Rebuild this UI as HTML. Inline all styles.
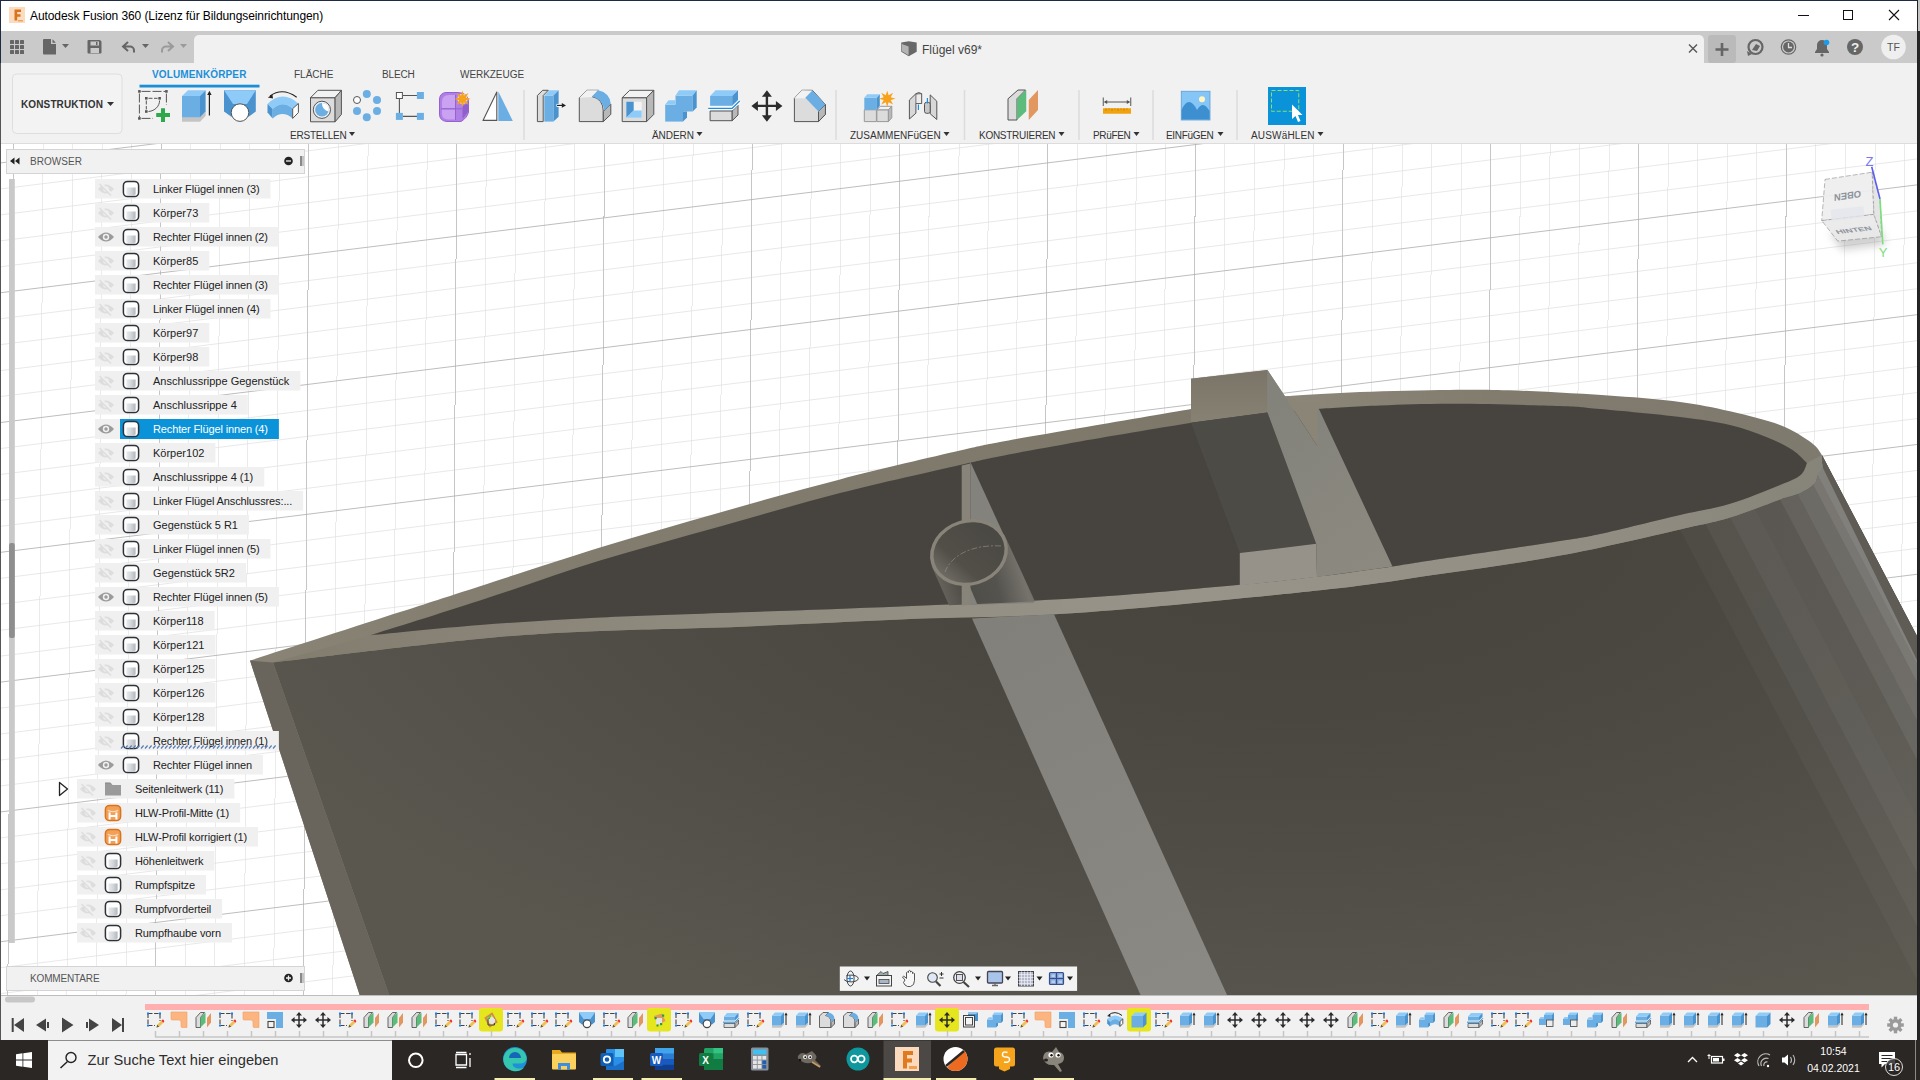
<!DOCTYPE html>
<html lang="de">
<head>
<meta charset="utf-8">
<title>Autodesk Fusion 360</title>
<style>
*{box-sizing:border-box;margin:0;padding:0}
html,body{width:1920px;height:1080px;overflow:hidden;background:#fff;font-family:"Liberation Sans",sans-serif;color:#333}
.abs{position:absolute}
#win{position:absolute;left:0;top:0;width:1917px;height:1040px;background:#fff;overflow:hidden}
#rightstrip{position:absolute;left:1917px;top:0;width:3px;height:1040px;background:linear-gradient(#c4c4c4 0,#c4c4c4 31px,#262626 31px);border-left:1px solid #222}
#titlebar{position:absolute;left:0;top:0;width:1917px;height:31px;background:#fff;border-top:1px solid #1f2a44}
#titlebar .ttl{position:absolute;left:30px;top:8px;font-size:12.2px;color:#000;white-space:nowrap;letter-spacing:-0.05px}
#qat{position:absolute;left:0;top:31px;width:1917px;height:32px;background:#cacaca}
#tab{position:absolute;left:194px;top:35px;width:1510px;height:28px;background:#f1f1f1;border-radius:5px 5px 0 0}
#toolbar{position:absolute;left:0;top:63px;width:1917px;height:81px;background:#f1f1f1;border-bottom:1px solid #dcdcdc}
#viewport{position:absolute;left:0;top:144px;width:1917px;height:852px;background:#fff;overflow:hidden}
#timeline{position:absolute;left:0;top:995px;width:1917px;height:45px;background:#f1f1f1;border-top:1px solid #bdbdbd}
#taskbar{position:absolute;left:0;top:1040px;width:1920px;height:40px;background:#2a2724}
#leftedge{position:absolute;left:0;top:0;width:1px;height:1040px;background:linear-gradient(#1f2a44 0,#1f2a44 63px,#555 63px)}
.tlabel{position:absolute;font-size:10.5px;color:#333;white-space:nowrap;letter-spacing:0.1px}
.tabname{position:absolute;top:69px;font-size:11px;color:#444;white-space:nowrap;letter-spacing:0.1px}
.row{position:absolute;height:20px;background:#f0f0f0;font-size:11px;color:#222;white-space:nowrap}
.row span{position:absolute;top:4px}
.bt{position:absolute;font-size:11px;color:#222;white-space:nowrap;line-height:14px;letter-spacing:0}
</style>
</head>
<body>
<div id="win">
  <div id="titlebar"></div>
  <div id="qat"></div>
  <div id="tab"></div>
  <div id="toolbar"></div>
  <div id="viewport">
    <!--VIEWPORT-->
<svg class="abs" style="left:0;top:-144px" width="1920" height="1080" viewBox="0 0 1920 1080">
<path d="M-104.7 144L-110.4 996M-75.1 144L-80.9 996M-45.6 144L-51.3 996M-16.1 144L-21.8 996M43.1 144L37.3 996M72.6 144L66.9 996M102.2 144L96.4 996M131.7 144L126.0 996M190.8 144L185.1 996M220.3 144L214.6 996M249.9 144L244.2 996M279.4 144L273.7 996M338.6 144L332.8 996M368.1 144L362.4 996M397.6 144L391.9 996M427.2 144L421.5 996M486.3 144L480.6 996M515.9 144L510.1 996M545.4 144L539.7 996M575.0 144L569.2 996M634.0 144L628.3 996M663.6 144L657.9 996M693.1 144L687.4 996M722.7 144L717.0 996M781.8 144L776.1 996M811.4 144L805.6 996M840.9 144L835.2 996M870.5 144L864.7 996M929.5 144L923.8 996M959.1 144L953.4 996M988.6 144L982.9 996M1018.2 144L1012.5 996M1077.3 144L1071.6 996M1106.8 144L1101.1 996M1136.4 144L1130.7 996M1166.0 144L1160.2 996M1225.0 144L1219.3 996M1254.6 144L1248.9 996M1284.2 144L1278.4 996M1313.7 144L1308.0 996M1372.8 144L1367.1 996M1402.3 144L1396.6 996M1431.9 144L1426.2 996M1461.5 144L1455.7 996M1520.5 144L1514.8 996M1550.1 144L1544.4 996M1579.7 144L1573.9 996M1609.2 144L1603.5 996M1668.3 144L1662.6 996M1697.8 144L1692.1 996M1727.4 144L1721.7 996M1757.0 144L1751.2 996M1816.0 144L1810.3 996M1845.6 144L1839.9 996M1875.2 144L1869.4 996M1904.7 144L1899.0 996M1963.8 144L1958.1 996M1993.3 144L1987.6 996M2022.9 144L2017.2 996M2052.4 144L2046.7 996" stroke="#ebebeb" stroke-width="1" fill="none" shape-rendering="crispEdges"/>
<path d="M0 59.2L1920 -178.9M0 85.1L1920 -153.0M0 111.1L1920 -127.0M0 137.0L1920 -101.0M0 189.0L1920 -49.1M0 214.9L1920 -23.2M0 240.9L1920 2.8M0 266.8L1920 28.8M0 318.8L1920 80.7M0 344.7L1920 106.6M0 370.7L1920 132.6M0 396.6L1920 158.6M0 448.6L1920 210.5M0 474.5L1920 236.4M0 500.5L1920 262.4M0 526.4L1920 288.4M0 578.4L1920 340.3M0 604.3L1920 366.2M0 630.3L1920 392.2M0 656.2L1920 418.2M0 708.2L1920 470.1M0 734.1L1920 496.0M0 760.1L1920 522.0M0 786.0L1920 548.0M0 838.0L1920 599.9M0 863.9L1920 625.8M0 889.9L1920 651.8M0 915.8L1920 677.8M0 967.8L1920 729.7M0 993.7L1920 755.6M0 1019.7L1920 781.6M0 1045.6L1920 807.6M0 1097.6L1920 859.5M0 1123.5L1920 885.4M0 1149.5L1920 911.4M0 1175.4L1920 937.4M0 1227.4L1920 989.3M0 1253.3L1920 1015.2M0 1279.3L1920 1041.2M0 1305.2L1920 1067.2M0 1357.2L1920 1119.1M0 1383.1L1920 1145.0M0 1409.1L1920 1171.0M0 1435.0L1920 1197.0" stroke="#dedede" stroke-width=".7" fill="none"/>
<path d="M-134.2 144L-140.0 996M13.5 144L7.8 996M161.2 144L155.5 996M309.0 144L303.3 996M456.8 144L451.0 996M604.5 144L598.8 996M752.2 144L746.5 996M900.0 144L894.3 996M1047.8 144L1042.0 996M1195.5 144L1189.8 996M1343.2 144L1337.5 996M1491.0 144L1485.3 996M1638.8 144L1633.0 996M1786.5 144L1780.8 996M1934.2 144L1928.5 996" stroke="#c6c6c6" stroke-width="1" fill="none" shape-rendering="crispEdges"/>
<path d="M0 33.2L1920 -204.9M0 163.0L1920 -75.1M0 292.8L1920 54.7M0 422.6L1920 184.5M0 552.4L1920 314.3M0 682.2L1920 444.1M0 812.0L1920 573.9M0 941.8L1920 703.7M0 1071.6L1920 833.5M0 1201.4L1920 963.3M0 1331.2L1920 1093.1" stroke="#acacac" stroke-width=".8" fill="none"/>
<defs>
<radialGradient id="gskin" gradientUnits="userSpaceOnUse" cx="0" cy="0" r="1" gradientTransform="translate(1300,520) scale(1150,540)"><stop offset="0" stop-color="#46433d"/><stop offset="0.35" stop-color="#4a4741"/><stop offset="0.6" stop-color="#4f4c46"/><stop offset="0.85" stop-color="#56534c"/><stop offset="1" stop-color="#5a574f"/></radialGradient>
<linearGradient id="grimL" gradientUnits="userSpaceOnUse" x1="300" y1="700" x2="1800" y2="450"><stop offset="0" stop-color="#837d70"/><stop offset="0.25" stop-color="#8f8a7e"/><stop offset="0.6" stop-color="#989489"/><stop offset="0.85" stop-color="#928e83"/><stop offset="1" stop-color="#87847a"/></linearGradient>
<linearGradient id="gtube" gradientUnits="userSpaceOnUse" x1="940" y1="590" x2="1030" y2="565"><stop offset="0" stop-color="#66635c"/><stop offset="0.25" stop-color="#4e4c46"/><stop offset="0.6" stop-color="#55534d"/><stop offset="0.9" stop-color="#75736c"/><stop offset="1" stop-color="#6a6861"/></linearGradient>
<linearGradient id="gtubein" gradientUnits="userSpaceOnUse" x1="935" y1="575" x2="1000" y2="535"><stop offset="0" stop-color="#76736b"/><stop offset="0.35" stop-color="#524f49"/><stop offset="1" stop-color="#4a4842"/></linearGradient>
<linearGradient id="grib" gradientUnits="userSpaceOnUse" x1="1270" y1="400" x2="1390" y2="570"><stop offset="0" stop-color="#83827b"/><stop offset="1" stop-color="#8c8a80"/></linearGradient>
<linearGradient id="gsil" gradientUnits="userSpaceOnUse" x1="250" y1="0" x2="1822" y2="0"><stop offset="0" stop-color="#8a8476"/><stop offset="0.16" stop-color="#837d70"/><stop offset="0.6" stop-color="#7e786b"/><stop offset="0.658" stop-color="#8c8779"/><stop offset="0.8" stop-color="#817b6e"/><stop offset="1" stop-color="#7f7a6e"/></linearGradient>
<linearGradient id="gbox" gradientUnits="userSpaceOnUse" x1="0" y1="372" x2="0" y2="420"><stop offset="0" stop-color="#7a7568"/><stop offset="1" stop-color="#878173"/></linearGradient>
<linearGradient id="gstrip" gradientUnits="userSpaceOnUse" x1="1000" y1="620" x2="1180" y2="990"><stop offset="0" stop-color="#81807b"/><stop offset="1" stop-color="#8a8983"/></linearGradient>
</defs>
<path d="M250.0 660.6C275.0 652.5 361.7 624.5 400.0 612.1C438.3 599.7 446.7 597.0 480.0 586.2C513.3 575.5 560.0 559.8 600.0 547.5C640.0 535.2 680.0 523.9 720.0 512.5C760.0 501.1 800.0 489.7 840.0 479.4C880.0 469.1 933.3 456.8 960.0 450.6C986.7 444.4 980.0 445.8 1000.0 442.0C1020.0 438.2 1048.2 433.5 1080.0 428.0C1111.8 422.5 1172.5 412.2 1191.0 409.0L1191.0 378.8L1267.5 370.0L1285.0 396.2L1285.0 396.2C1295.8 395.6 1324.2 393.5 1350.0 392.5C1375.8 391.5 1412.5 390.3 1440.0 390.0C1467.5 389.7 1485.8 389.5 1515.0 390.5C1544.2 391.5 1587.5 394.1 1615.0 396.0C1642.5 397.9 1660.8 399.4 1680.0 401.9C1699.2 404.4 1713.3 407.4 1730.0 411.2C1746.7 415.1 1766.5 419.8 1780.0 425.0C1793.5 430.2 1804.3 437.5 1811.2 442.5C1818.2 447.5 1820.1 452.9 1821.9 455.0L1917.0 636.0L1917.0 996.0L360.0 996.0Z" fill="url(#gsil)"/>
<polygon points="1191.0,378.8 1267.5,370.0 1267.5,412.8 1191.0,423.0" fill="url(#gbox)"/>
<path d="M273.0 662.5C307.5 658.5 425.5 644.0 480.0 638.8C534.5 633.5 560.0 632.9 600.0 631.0C640.0 629.1 670.0 629.4 720.0 627.5C770.0 625.6 840.0 621.9 900.0 619.4C960.0 616.9 1010.0 617.6 1080.0 612.8C1150.0 607.9 1260.0 596.8 1320.0 590.3C1380.0 583.8 1400.0 579.8 1440.0 574.0C1480.0 568.2 1520.0 563.0 1560.0 555.6C1600.0 548.2 1651.7 535.8 1680.0 529.4C1708.3 523.0 1713.3 522.5 1730.0 517.5C1746.7 512.5 1768.8 503.4 1780.0 499.4C1791.2 495.4 1792.0 496.2 1797.5 493.8C1803.0 491.2 1809.7 487.5 1813.0 484.4C1816.3 481.3 1816.0 478.2 1817.5 475.0C1819.0 471.8 1821.2 468.3 1821.9 465.0C1822.6 461.7 1821.9 456.7 1821.9 455.0L1917.0 636.0L1917.0 996.0L389.5 996.0Z" fill="url(#gskin)"/>
<polygon points="1680.0,529.4 1705.0,523.5 2105.0,1283.5 2080.0,1289.4" fill="#fff" fill-opacity="0.03"/>
<polygon points="1705.0,523.5 1730.0,517.5 2130.0,1277.5 2105.0,1283.5" fill="#fff" fill-opacity="0.065"/>
<polygon points="1730.0,517.5 1755.0,508.5 2155.0,1268.5 2130.0,1277.5" fill="#fff" fill-opacity="0.1"/>
<polygon points="1755.0,508.5 1780.0,499.4 2180.0,1259.4 2155.0,1268.5" fill="#fff" fill-opacity="0.085"/>
<polygon points="1780.0,499.4 1797.5,493.8 2197.5,1253.8 2180.0,1259.4" fill="#fff" fill-opacity="0.14"/>
<polygon points="1797.5,493.8 1813.0,484.4 2213.0,1244.4 2197.5,1253.8" fill="#fff" fill-opacity="0.19"/>
<polygon points="1813.0,484.4 1817.5,475.0 2217.5,1235.0 2213.0,1244.4" fill="#fff" fill-opacity="0.25"/>
<polygon points="1817.5,475.0 1822.5,463.0 2222.5,1223.0 2217.5,1235.0" fill="#fff" fill-opacity="0.3"/>
<polygon points="1821.9,455.0 1917.0,636.0 1917.0,660.0 1823.0,468.0" fill="#5e5c54"/>
<polygon points="250.0,660.6 273.0,662.5 389.5,996.0 360.0,996.0" fill="#69655d"/>
<path d="M273.0 662.5C307.5 658.5 425.5 644.0 480.0 638.8C534.5 633.5 560.0 632.9 600.0 631.0C640.0 629.1 670.0 629.4 720.0 627.5C770.0 625.6 840.0 621.9 900.0 619.4C960.0 616.9 1010.0 617.6 1080.0 612.8C1150.0 607.9 1260.0 596.8 1320.0 590.3C1380.0 583.8 1400.0 579.8 1440.0 574.0C1480.0 568.2 1520.0 563.0 1560.0 555.6C1600.0 548.2 1651.7 535.8 1680.0 529.4C1708.3 523.0 1713.3 522.5 1730.0 517.5C1746.7 512.5 1768.8 503.4 1780.0 499.4C1791.2 495.4 1792.0 496.2 1797.5 493.8C1803.0 491.2 1809.7 487.5 1813.0 484.4C1816.3 481.3 1816.0 478.2 1817.5 475.0C1819.0 471.8 1821.2 468.3 1821.9 465.0C1822.6 461.7 1821.9 456.7 1821.9 455.0L1806.9 463.1C1805.9 465.1 1805.1 471.4 1800.6 475.0C1796.1 478.6 1791.8 480.2 1780.0 485.0C1768.2 489.8 1746.7 498.8 1730.0 503.8C1713.3 508.8 1701.7 510.0 1680.0 515.0C1658.3 520.0 1620.0 529.7 1600.0 534.0C1580.0 538.3 1586.7 536.8 1560.0 541.0C1533.3 545.2 1467.9 554.8 1440.0 559.0C1412.1 563.2 1412.5 563.5 1392.5 566.4C1372.5 569.3 1345.5 573.2 1320.0 576.2C1294.5 579.3 1279.8 581.1 1239.8 584.8C1199.8 588.4 1136.6 594.5 1080.0 598.1C1023.4 601.7 960.0 604.0 900.0 606.5C840.0 609.0 770.0 611.2 720.0 613.0C670.0 614.8 640.0 615.5 600.0 617.5C560.0 619.5 518.2 622.0 480.0 625.0C441.8 628.0 388.8 633.5 370.6 635.2Z" fill="url(#grimL)"/>
<path d="M370.6 635.2C388.8 629.5 441.8 613.0 480.0 600.6C518.2 588.2 560.0 573.0 600.0 560.6C640.0 548.2 680.0 537.8 720.0 526.5C760.0 515.2 800.0 503.4 840.0 493.1C880.0 482.9 933.3 471.1 960.0 465.0C986.7 458.9 980.0 460.2 1000.0 456.2C1020.0 452.3 1048.2 447.1 1080.0 441.5C1111.8 435.9 1172.5 425.9 1191.0 422.8L1267.5 412.5L1318.8 408.8L1318.8 408.8C1329.0 408.2 1357.3 406.3 1380.0 405.5C1402.7 404.7 1425.0 403.7 1455.0 403.8C1485.0 403.8 1535.8 405.1 1560.0 406.0C1584.2 406.9 1580.0 407.2 1600.0 409.0C1620.0 410.8 1658.3 414.3 1680.0 417.0C1701.7 419.7 1715.4 421.6 1730.0 425.0C1744.6 428.4 1757.1 433.3 1767.5 437.5C1777.9 441.7 1785.9 445.7 1792.5 450.0C1799.1 454.3 1804.5 460.9 1806.9 463.1L1806.9 463.1C1805.9 465.1 1805.1 471.4 1800.6 475.0C1796.1 478.6 1791.8 480.2 1780.0 485.0C1768.2 489.8 1746.7 498.8 1730.0 503.8C1713.3 508.8 1701.7 510.0 1680.0 515.0C1658.3 520.0 1620.0 529.7 1600.0 534.0C1580.0 538.3 1586.7 536.8 1560.0 541.0C1533.3 545.2 1467.9 554.8 1440.0 559.0C1412.1 563.2 1412.5 563.5 1392.5 566.4C1372.5 569.3 1345.5 573.2 1320.0 576.2C1294.5 579.3 1279.8 581.1 1239.8 584.8C1199.8 588.4 1136.6 594.5 1080.0 598.1C1023.4 601.7 960.0 604.0 900.0 606.5C840.0 609.0 770.0 611.2 720.0 613.0C670.0 614.8 640.0 615.5 600.0 617.5C560.0 619.5 518.2 622.0 480.0 625.0C441.8 628.0 388.8 633.5 370.6 635.2Z" fill="#47443f"/>
<polygon points="972.0,618.5 1054.0,614.2 1227.5,996.0 1141.0,996.0" fill="url(#gstrip)"/>
<polygon points="970.4,462.0 1034.0,601.0 1034.0,603.0 970.4,605.0" fill="#83827c"/>
<polygon points="931.5,566.0 949.0,605.2 1035.0,601.5 1004.5,535.0" fill="url(#gtube)"/>
<polygon points="961.7,465.5 970.4,463.5 970.4,605.0 961.7,605.4" fill="#89847a"/>
<polygon points="969.5,586.0 977.5,604.7 969.5,605.0" fill="#83827c"/>
<g transform="rotate(-17 969 552.5)"><ellipse cx="969" cy="552.5" rx="39.5" ry="33" fill="#89847a"/><ellipse cx="969" cy="552.5" rx="36" ry="29.7" fill="url(#gtubein)"/></g>
<path d="M945 572 C950 558 968 544 1002 546" stroke="#a9a69d" stroke-width="0.6" stroke-dasharray="6 2 2 2" opacity=".8" fill="none"/>
<polygon points="1191.0,422.8 1267.5,412.5 1316.2,543.8 1239.8,553.1" fill="#4d4b46"/>
<polygon points="1239.8,553.1 1316.2,543.8 1317.0,577.0 1239.8,585.5" fill="#96928a"/>
<polygon points="1267.5,370.0 1285.0,396.2 1319.5,408.2 1318.2,409.5 1318.2,447.3" fill="#8a8577"/>
<polygon points="1267.5,370.0 1267.5,412.5 1316.2,543.8 1317.0,577.0 1392.5,566.4 1318.8,408.8 1317.5,410.0 1317.5,446.2" fill="url(#grib)"/>
</svg>
<!--/VIEWPORT-->
<!--BROWSER-->
<svg class="abs" style="left:0;top:-144px" width="320" height="1080" viewBox="0 0 320 1080"><defs><linearGradient id="bodyg" x1="0" y1="0" x2="1" y2="0"><stop offset="0" stop-color="#e9ebee"/><stop offset=".5" stop-color="#d3d6da"/><stop offset="1" stop-color="#b3b7bd"/></linearGradient></defs>
<rect x="9" y="179" width="5.800" height="764" fill="#c9c9c9"/><rect x="9" y="543" width="5.800" height="95" rx="2" fill="#8e8e8e"/>
<rect x="6.5" y="149.5" width="298" height="24" fill="#f1f1f1" stroke="#d4d4d4"/>
<path d="M14.500 157.500v7l-4.500-3.500zM19.500 157.500v7l-4.500-3.500z" fill="#222"/>
<circle cx="288.500" cy="161" r="4.300" fill="#222"/><path d="M286 161h5" stroke="#f1f1f1" stroke-width="1.300"/><path d="M301 156v10" stroke="#222" stroke-width="1"/><path d="M303 156v10" stroke="#999" stroke-width="1"/>
<rect x="6.500" y="966.500" width="298" height="24" fill="#f1f1f1" stroke="#d4d4d4"/>
<circle cx="288.500" cy="978" r="4.300" fill="#222"/><path d="M286 978h5M288.500 975.500v5" stroke="#f1f1f1" stroke-width="1.300"/><path d="M301 973v10" stroke="#222" stroke-width="1"/><path d="M303 973v10" stroke="#999" stroke-width="1"/>
<rect x="95" y="179" width="175.46875" height="19.500" fill="#f0f0f0"/>
<g opacity=".55"><path d="M98 189Q106 180 114 189Q106 198 98 189Z" fill="#cfcfcf"/><circle cx="106" cy="189" r="2.8" fill="#f0f0f0"/><path d="M100 183L112 195" stroke="#f0f0f0" stroke-width="3"/><path d="M99.5 184L111 195.5" stroke="#cfcfcf" stroke-width="1.4"/></g>
<rect x="123.4" y="181.4" width="15.2" height="15.2" rx="4.2" fill="#fff" stroke="#2f3338" stroke-width="1.5"/><path d="M126.4 187.6H135.6V194.4Q131.0 196.20000000000002 126.4 194.4Z" fill="url(#bodyg)"/>
<rect x="95" y="203" width="114.265625" height="19.500" fill="#f0f0f0"/>
<g opacity=".55"><path d="M98 213Q106 204 114 213Q106 222 98 213Z" fill="#cfcfcf"/><circle cx="106" cy="213" r="2.8" fill="#f0f0f0"/><path d="M100 207L112 219" stroke="#f0f0f0" stroke-width="3"/><path d="M99.5 208L111 219.5" stroke="#cfcfcf" stroke-width="1.4"/></g>
<rect x="123.4" y="205.4" width="15.2" height="15.2" rx="4.2" fill="#fff" stroke="#2f3338" stroke-width="1.5"/><path d="M126.4 211.6H135.6V218.4Q131.0 220.20000000000002 126.4 218.4Z" fill="url(#bodyg)"/>
<rect x="95" y="227" width="183.890625" height="19.500" fill="#f0f0f0"/>
<path d="M98 237Q106 228 114 237Q106 246 98 237Z" fill="#9b9b9b"/><circle cx="106" cy="237" r="3.2" fill="#f0f0f0"/><circle cx="106" cy="237" r="1.7" fill="#9b9b9b"/>
<rect x="123.4" y="229.4" width="15.2" height="15.2" rx="4.2" fill="#fff" stroke="#2f3338" stroke-width="1.5"/><path d="M126.4 235.6H135.6V242.4Q131.0 244.20000000000002 126.4 242.4Z" fill="url(#bodyg)"/>
<rect x="95" y="251" width="114.265625" height="19.500" fill="#f0f0f0"/>
<g opacity=".55"><path d="M98 261Q106 252 114 261Q106 270 98 261Z" fill="#cfcfcf"/><circle cx="106" cy="261" r="2.8" fill="#f0f0f0"/><path d="M100 255L112 267" stroke="#f0f0f0" stroke-width="3"/><path d="M99.5 256L111 267.5" stroke="#cfcfcf" stroke-width="1.4"/></g>
<rect x="123.4" y="253.4" width="15.2" height="15.2" rx="4.2" fill="#fff" stroke="#2f3338" stroke-width="1.5"/><path d="M126.4 259.6H135.6V266.4Q131.0 268.2 126.4 266.4Z" fill="url(#bodyg)"/>
<rect x="95" y="275" width="183.890625" height="19.500" fill="#f0f0f0"/>
<g opacity=".55"><path d="M98 285Q106 276 114 285Q106 294 98 285Z" fill="#cfcfcf"/><circle cx="106" cy="285" r="2.8" fill="#f0f0f0"/><path d="M100 279L112 291" stroke="#f0f0f0" stroke-width="3"/><path d="M99.5 280L111 291.5" stroke="#cfcfcf" stroke-width="1.4"/></g>
<rect x="123.4" y="277.4" width="15.2" height="15.2" rx="4.2" fill="#fff" stroke="#2f3338" stroke-width="1.5"/><path d="M126.4 283.59999999999997H135.6V290.4Q131.0 292.2 126.4 290.4Z" fill="url(#bodyg)"/>
<rect x="95" y="299" width="175.46875" height="19.500" fill="#f0f0f0"/>
<g opacity=".55"><path d="M98 309Q106 300 114 309Q106 318 98 309Z" fill="#cfcfcf"/><circle cx="106" cy="309" r="2.8" fill="#f0f0f0"/><path d="M100 303L112 315" stroke="#f0f0f0" stroke-width="3"/><path d="M99.5 304L111 315.5" stroke="#cfcfcf" stroke-width="1.4"/></g>
<rect x="123.4" y="301.4" width="15.2" height="15.2" rx="4.2" fill="#fff" stroke="#2f3338" stroke-width="1.5"/><path d="M126.4 307.59999999999997H135.6V314.4Q131.0 316.2 126.4 314.4Z" fill="url(#bodyg)"/>
<rect x="95" y="323" width="114.265625" height="19.500" fill="#f0f0f0"/>
<g opacity=".55"><path d="M98 333Q106 324 114 333Q106 342 98 333Z" fill="#cfcfcf"/><circle cx="106" cy="333" r="2.8" fill="#f0f0f0"/><path d="M100 327L112 339" stroke="#f0f0f0" stroke-width="3"/><path d="M99.5 328L111 339.5" stroke="#cfcfcf" stroke-width="1.4"/></g>
<rect x="123.4" y="325.4" width="15.2" height="15.2" rx="4.2" fill="#fff" stroke="#2f3338" stroke-width="1.5"/><path d="M126.4 331.59999999999997H135.6V338.4Q131.0 340.2 126.4 338.4Z" fill="url(#bodyg)"/>
<rect x="95" y="347" width="114.265625" height="19.500" fill="#f0f0f0"/>
<g opacity=".55"><path d="M98 357Q106 348 114 357Q106 366 98 357Z" fill="#cfcfcf"/><circle cx="106" cy="357" r="2.8" fill="#f0f0f0"/><path d="M100 351L112 363" stroke="#f0f0f0" stroke-width="3"/><path d="M99.5 352L111 363.5" stroke="#cfcfcf" stroke-width="1.4"/></g>
<rect x="123.4" y="349.4" width="15.2" height="15.2" rx="4.2" fill="#fff" stroke="#2f3338" stroke-width="1.5"/><path d="M126.4 355.59999999999997H135.6V362.4Q131.0 364.2 126.4 362.4Z" fill="url(#bodyg)"/>
<rect x="95" y="371" width="205.359375" height="19.500" fill="#f0f0f0"/>
<g opacity=".55"><path d="M98 381Q106 372 114 381Q106 390 98 381Z" fill="#cfcfcf"/><circle cx="106" cy="381" r="2.8" fill="#f0f0f0"/><path d="M100 375L112 387" stroke="#f0f0f0" stroke-width="3"/><path d="M99.5 376L111 387.5" stroke="#cfcfcf" stroke-width="1.4"/></g>
<rect x="123.4" y="373.4" width="15.2" height="15.2" rx="4.2" fill="#fff" stroke="#2f3338" stroke-width="1.5"/><path d="M126.4 379.59999999999997H135.6V386.4Q131.0 388.2 126.4 386.4Z" fill="url(#bodyg)"/>
<rect x="95" y="395" width="152.78125" height="19.500" fill="#f0f0f0"/>
<g opacity=".55"><path d="M98 405Q106 396 114 405Q106 414 98 405Z" fill="#cfcfcf"/><circle cx="106" cy="405" r="2.8" fill="#f0f0f0"/><path d="M100 399L112 411" stroke="#f0f0f0" stroke-width="3"/><path d="M99.5 400L111 411.5" stroke="#cfcfcf" stroke-width="1.4"/></g>
<rect x="123.4" y="397.4" width="15.2" height="15.2" rx="4.2" fill="#fff" stroke="#2f3338" stroke-width="1.5"/><path d="M126.4 403.59999999999997H135.6V410.4Q131.0 412.2 126.4 410.4Z" fill="url(#bodyg)"/>
<rect x="95" y="419" width="25" height="20" fill="#f0f0f0"/><rect x="120" y="419" width="158.890625" height="20" fill="#0a93d9"/>
<path d="M98 429Q106 420 114 429Q106 438 98 429Z" fill="#9b9b9b"/><circle cx="106" cy="429" r="3.2" fill="#f0f0f0"/><circle cx="106" cy="429" r="1.7" fill="#9b9b9b"/>
<rect x="123.4" y="421.4" width="15.2" height="15.2" rx="4.2" fill="#fff" stroke="#2f3338" stroke-width="1.5"/><path d="M126.4 427.59999999999997H135.6V434.4Q131.0 436.2 126.4 434.4Z" fill="url(#bodyg)"/>
<rect x="95" y="443" width="120.375" height="19.500" fill="#f0f0f0"/>
<g opacity=".55"><path d="M98 453Q106 444 114 453Q106 462 98 453Z" fill="#cfcfcf"/><circle cx="106" cy="453" r="2.8" fill="#f0f0f0"/><path d="M100 447L112 459" stroke="#f0f0f0" stroke-width="3"/><path d="M99.5 448L111 459.5" stroke="#cfcfcf" stroke-width="1.4"/></g>
<rect x="123.4" y="445.4" width="15.2" height="15.2" rx="4.2" fill="#fff" stroke="#2f3338" stroke-width="1.5"/><path d="M126.4 451.59999999999997H135.6V458.4Q131.0 460.2 126.4 458.4Z" fill="url(#bodyg)"/>
<rect x="95" y="467" width="169.28125" height="19.500" fill="#f0f0f0"/>
<g opacity=".55"><path d="M98 477Q106 468 114 477Q106 486 98 477Z" fill="#cfcfcf"/><circle cx="106" cy="477" r="2.8" fill="#f0f0f0"/><path d="M100 471L112 483" stroke="#f0f0f0" stroke-width="3"/><path d="M99.5 472L111 483.5" stroke="#cfcfcf" stroke-width="1.4"/></g>
<rect x="123.4" y="469.4" width="15.2" height="15.2" rx="4.2" fill="#fff" stroke="#2f3338" stroke-width="1.5"/><path d="M126.4 475.59999999999997H135.6V482.4Q131.0 484.2 126.4 482.4Z" fill="url(#bodyg)"/>
<rect x="95" y="491" width="208.171875" height="19.500" fill="#f0f0f0"/>
<g opacity=".55"><path d="M98 501Q106 492 114 501Q106 510 98 501Z" fill="#cfcfcf"/><circle cx="106" cy="501" r="2.8" fill="#f0f0f0"/><path d="M100 495L112 507" stroke="#f0f0f0" stroke-width="3"/><path d="M99.5 496L111 507.5" stroke="#cfcfcf" stroke-width="1.4"/></g>
<rect x="123.4" y="493.4" width="15.2" height="15.2" rx="4.2" fill="#fff" stroke="#2f3338" stroke-width="1.5"/><path d="M126.4 499.59999999999997H135.6V506.4Q131.0 508.2 126.4 506.4Z" fill="url(#bodyg)"/>
<rect x="95" y="515" width="154" height="19.500" fill="#f0f0f0"/>
<g opacity=".55"><path d="M98 525Q106 516 114 525Q106 534 98 525Z" fill="#cfcfcf"/><circle cx="106" cy="525" r="2.8" fill="#f0f0f0"/><path d="M100 519L112 531" stroke="#f0f0f0" stroke-width="3"/><path d="M99.5 520L111 531.5" stroke="#cfcfcf" stroke-width="1.4"/></g>
<rect x="123.4" y="517.4" width="15.2" height="15.2" rx="4.2" fill="#fff" stroke="#2f3338" stroke-width="1.5"/><path d="M126.4 523.6H135.6V530.4Q131.0 532.1999999999999 126.4 530.4Z" fill="url(#bodyg)"/>
<rect x="95" y="539" width="175.46875" height="19.500" fill="#f0f0f0"/>
<g opacity=".55"><path d="M98 549Q106 540 114 549Q106 558 98 549Z" fill="#cfcfcf"/><circle cx="106" cy="549" r="2.8" fill="#f0f0f0"/><path d="M100 543L112 555" stroke="#f0f0f0" stroke-width="3"/><path d="M99.5 544L111 555.5" stroke="#cfcfcf" stroke-width="1.4"/></g>
<rect x="123.4" y="541.4" width="15.2" height="15.2" rx="4.2" fill="#fff" stroke="#2f3338" stroke-width="1.5"/><path d="M126.4 547.6H135.6V554.4Q131.0 556.1999999999999 126.4 554.4Z" fill="url(#bodyg)"/>
<rect x="95" y="563" width="150.9375" height="19.500" fill="#f0f0f0"/>
<g opacity=".55"><path d="M98 573Q106 564 114 573Q106 582 98 573Z" fill="#cfcfcf"/><circle cx="106" cy="573" r="2.8" fill="#f0f0f0"/><path d="M100 567L112 579" stroke="#f0f0f0" stroke-width="3"/><path d="M99.5 568L111 579.5" stroke="#cfcfcf" stroke-width="1.4"/></g>
<rect x="123.4" y="565.4" width="15.2" height="15.2" rx="4.2" fill="#fff" stroke="#2f3338" stroke-width="1.5"/><path d="M126.4 571.6H135.6V578.4Q131.0 580.1999999999999 126.4 578.4Z" fill="url(#bodyg)"/>
<rect x="95" y="587" width="183.890625" height="19.500" fill="#f0f0f0"/>
<path d="M98 597Q106 588 114 597Q106 606 98 597Z" fill="#9b9b9b"/><circle cx="106" cy="597" r="3.2" fill="#f0f0f0"/><circle cx="106" cy="597" r="1.7" fill="#9b9b9b"/>
<rect x="123.4" y="589.4" width="15.2" height="15.2" rx="4.2" fill="#fff" stroke="#2f3338" stroke-width="1.5"/><path d="M126.4 595.6H135.6V602.4Q131.0 604.1999999999999 126.4 602.4Z" fill="url(#bodyg)"/>
<rect x="95" y="611" width="119.5625" height="19.500" fill="#f0f0f0"/>
<g opacity=".55"><path d="M98 621Q106 612 114 621Q106 630 98 621Z" fill="#cfcfcf"/><circle cx="106" cy="621" r="2.8" fill="#f0f0f0"/><path d="M100 615L112 627" stroke="#f0f0f0" stroke-width="3"/><path d="M99.5 616L111 627.5" stroke="#cfcfcf" stroke-width="1.4"/></g>
<rect x="123.4" y="613.4" width="15.2" height="15.2" rx="4.2" fill="#fff" stroke="#2f3338" stroke-width="1.5"/><path d="M126.4 619.6H135.6V626.4Q131.0 628.1999999999999 126.4 626.4Z" fill="url(#bodyg)"/>
<rect x="95" y="635" width="120.375" height="19.500" fill="#f0f0f0"/>
<g opacity=".55"><path d="M98 645Q106 636 114 645Q106 654 98 645Z" fill="#cfcfcf"/><circle cx="106" cy="645" r="2.8" fill="#f0f0f0"/><path d="M100 639L112 651" stroke="#f0f0f0" stroke-width="3"/><path d="M99.5 640L111 651.5" stroke="#cfcfcf" stroke-width="1.4"/></g>
<rect x="123.4" y="637.4" width="15.2" height="15.2" rx="4.2" fill="#fff" stroke="#2f3338" stroke-width="1.5"/><path d="M126.4 643.6H135.6V650.4Q131.0 652.1999999999999 126.4 650.4Z" fill="url(#bodyg)"/>
<rect x="95" y="659" width="120.375" height="19.500" fill="#f0f0f0"/>
<g opacity=".55"><path d="M98 669Q106 660 114 669Q106 678 98 669Z" fill="#cfcfcf"/><circle cx="106" cy="669" r="2.8" fill="#f0f0f0"/><path d="M100 663L112 675" stroke="#f0f0f0" stroke-width="3"/><path d="M99.5 664L111 675.5" stroke="#cfcfcf" stroke-width="1.4"/></g>
<rect x="123.4" y="661.4" width="15.2" height="15.2" rx="4.2" fill="#fff" stroke="#2f3338" stroke-width="1.5"/><path d="M126.4 667.6H135.6V674.4Q131.0 676.1999999999999 126.4 674.4Z" fill="url(#bodyg)"/>
<rect x="95" y="683" width="120.375" height="19.500" fill="#f0f0f0"/>
<g opacity=".55"><path d="M98 693Q106 684 114 693Q106 702 98 693Z" fill="#cfcfcf"/><circle cx="106" cy="693" r="2.8" fill="#f0f0f0"/><path d="M100 687L112 699" stroke="#f0f0f0" stroke-width="3"/><path d="M99.5 688L111 699.5" stroke="#cfcfcf" stroke-width="1.4"/></g>
<rect x="123.4" y="685.4" width="15.2" height="15.2" rx="4.2" fill="#fff" stroke="#2f3338" stroke-width="1.5"/><path d="M126.4 691.6H135.6V698.4Q131.0 700.1999999999999 126.4 698.4Z" fill="url(#bodyg)"/>
<rect x="95" y="707" width="120.375" height="19.500" fill="#f0f0f0"/>
<g opacity=".55"><path d="M98 717Q106 708 114 717Q106 726 98 717Z" fill="#cfcfcf"/><circle cx="106" cy="717" r="2.8" fill="#f0f0f0"/><path d="M100 711L112 723" stroke="#f0f0f0" stroke-width="3"/><path d="M99.5 712L111 723.5" stroke="#cfcfcf" stroke-width="1.4"/></g>
<rect x="123.4" y="709.4" width="15.2" height="15.2" rx="4.2" fill="#fff" stroke="#2f3338" stroke-width="1.5"/><path d="M126.4 715.6H135.6V722.4Q131.0 724.1999999999999 126.4 722.4Z" fill="url(#bodyg)"/>
<rect x="95" y="731" width="183.890625" height="19.500" fill="#f0f0f0"/>
<g opacity=".55"><path d="M98 741Q106 732 114 741Q106 750 98 741Z" fill="#cfcfcf"/><circle cx="106" cy="741" r="2.8" fill="#f0f0f0"/><path d="M100 735L112 747" stroke="#f0f0f0" stroke-width="3"/><path d="M99.5 736L111 747.5" stroke="#cfcfcf" stroke-width="1.4"/></g>
<rect x="123.4" y="733.4" width="15.2" height="15.2" rx="4.2" fill="#fff" stroke="#2f3338" stroke-width="1.5"/><path d="M126.4 739.6H135.6V746.4Q131.0 748.1999999999999 126.4 746.4Z" fill="url(#bodyg)"/>
<path d="M121 748.5l2.6-3M125 748.5l2.6-3M129 748.5l2.6-3M133 748.5l2.6-3M137 748.5l2.6-3M141 748.5l2.6-3M145 748.5l2.6-3M149 748.5l2.6-3M153 748.5l2.6-3M157 748.5l2.6-3M161 748.5l2.6-3M165 748.5l2.6-3M169 748.5l2.6-3M173 748.5l2.6-3M177 748.5l2.6-3M181 748.5l2.6-3M185 748.5l2.6-3M189 748.5l2.6-3M193 748.5l2.6-3M197 748.5l2.6-3M201 748.5l2.6-3M205 748.5l2.6-3M209 748.5l2.6-3M213 748.5l2.6-3M217 748.5l2.6-3M221 748.5l2.6-3M225 748.5l2.6-3M229 748.5l2.6-3M233 748.5l2.6-3M237 748.5l2.6-3M241 748.5l2.6-3M245 748.5l2.6-3M249 748.5l2.6-3M253 748.5l2.6-3M257 748.5l2.6-3M261 748.5l2.6-3M265 748.5l2.6-3M269 748.5l2.6-3M273 748.5l2.6-3" stroke="#5a7db5" stroke-width="1.2" fill="none"/>
<rect x="95" y="755" width="167.90625" height="19.500" fill="#f0f0f0"/>
<path d="M98 765Q106 756 114 765Q106 774 98 765Z" fill="#9b9b9b"/><circle cx="106" cy="765" r="3.2" fill="#f0f0f0"/><circle cx="106" cy="765" r="1.7" fill="#9b9b9b"/>
<rect x="123.4" y="757.4" width="15.2" height="15.2" rx="4.2" fill="#fff" stroke="#2f3338" stroke-width="1.5"/><path d="M126.4 763.6H135.6V770.4Q131.0 772.1999999999999 126.4 770.4Z" fill="url(#bodyg)"/>
<rect x="77" y="779" width="157.390625" height="19.500" fill="#f0f0f0"/>
<g opacity=".55"><path d="M80 789Q88 780 96 789Q88 798 80 789Z" fill="#cfcfcf"/><circle cx="88" cy="789" r="2.8" fill="#f0f0f0"/><path d="M82 783L94 795" stroke="#f0f0f0" stroke-width="3"/><path d="M81.5 784L93 795.5" stroke="#cfcfcf" stroke-width="1.4"/></g>
<path d="M105 783H111L112.5 785H121V795.5H105Z" fill="#9a9a9a"/><path d="M105 782.5H110.5V783.5H105Z" fill="#858585"/>
<path d="M59.500 782.5V795.5L67.500 789Z" fill="#fff" stroke="#222" stroke-width="1.300" stroke-linejoin="round"/>
<rect x="77" y="803" width="163.15625" height="19.500" fill="#f0f0f0"/>
<g opacity=".55"><path d="M80 813Q88 804 96 813Q88 822 80 813Z" fill="#cfcfcf"/><circle cx="88" cy="813" r="2.8" fill="#f0f0f0"/><path d="M82 807L94 819" stroke="#f0f0f0" stroke-width="3"/><path d="M81.5 808L93 819.5" stroke="#cfcfcf" stroke-width="1.4"/></g>
<rect x="105.4" y="805.4" width="15.2" height="15.2" rx="4.2" fill="#f3a057" stroke="#d9741c" stroke-width="1.5"/><path d="M107.9 810.4Q113.0 812.9 118.10000000000001 810.4" stroke="#fbd9b8" stroke-width="1.2" fill="none"/><path d="M109.60000000000001 812.4V819.4M116.4 812.4V819.4M109.60000000000001 815.9H116.4" stroke="#fff" stroke-width="2" fill="none"/>
<rect x="77" y="827" width="181" height="19.500" fill="#f0f0f0"/>
<g opacity=".55"><path d="M80 837Q88 828 96 837Q88 846 80 837Z" fill="#cfcfcf"/><circle cx="88" cy="837" r="2.8" fill="#f0f0f0"/><path d="M82 831L94 843" stroke="#f0f0f0" stroke-width="3"/><path d="M81.5 832L93 843.5" stroke="#cfcfcf" stroke-width="1.4"/></g>
<rect x="105.4" y="829.4" width="15.2" height="15.2" rx="4.2" fill="#f3a057" stroke="#d9741c" stroke-width="1.5"/><path d="M107.9 834.4Q113.0 836.9 118.10000000000001 834.4" stroke="#fbd9b8" stroke-width="1.2" fill="none"/><path d="M109.60000000000001 836.4V843.4M116.4 836.4V843.4M109.60000000000001 839.9H116.4" stroke="#fff" stroke-width="2" fill="none"/>
<rect x="77" y="851" width="137.40625" height="19.500" fill="#f0f0f0"/>
<g opacity=".55"><path d="M80 861Q88 852 96 861Q88 870 80 861Z" fill="#cfcfcf"/><circle cx="88" cy="861" r="2.8" fill="#f0f0f0"/><path d="M82 855L94 867" stroke="#f0f0f0" stroke-width="3"/><path d="M81.5 856L93 867.5" stroke="#cfcfcf" stroke-width="1.4"/></g>
<rect x="105.4" y="853.4" width="15.2" height="15.2" rx="4.2" fill="#fff" stroke="#2f3338" stroke-width="1.5"/><path d="M108.4 859.6H117.60000000000001V866.4Q113.0 868.1999999999999 108.4 866.4Z" fill="url(#bodyg)"/>
<rect x="77" y="875" width="129.046875" height="19.500" fill="#f0f0f0"/>
<g opacity=".55"><path d="M80 885Q88 876 96 885Q88 894 80 885Z" fill="#cfcfcf"/><circle cx="88" cy="885" r="2.8" fill="#f0f0f0"/><path d="M82 879L94 891" stroke="#f0f0f0" stroke-width="3"/><path d="M81.5 880L93 891.5" stroke="#cfcfcf" stroke-width="1.4"/></g>
<rect x="105.4" y="877.4" width="15.2" height="15.2" rx="4.2" fill="#fff" stroke="#2f3338" stroke-width="1.5"/><path d="M108.4 883.6H117.60000000000001V890.4Q113.0 892.1999999999999 108.4 890.4Z" fill="url(#bodyg)"/>
<rect x="77" y="899" width="145.140625" height="19.500" fill="#f0f0f0"/>
<g opacity=".55"><path d="M80 909Q88 900 96 909Q88 918 80 909Z" fill="#cfcfcf"/><circle cx="88" cy="909" r="2.8" fill="#f0f0f0"/><path d="M82 903L94 915" stroke="#f0f0f0" stroke-width="3"/><path d="M81.5 904L93 915.5" stroke="#cfcfcf" stroke-width="1.4"/></g>
<rect x="105.4" y="901.4" width="15.2" height="15.2" rx="4.2" fill="#fff" stroke="#2f3338" stroke-width="1.5"/><path d="M108.4 907.6H117.60000000000001V914.4Q113.0 916.1999999999999 108.4 914.4Z" fill="url(#bodyg)"/>
<rect x="77" y="923" width="154.953125" height="19.500" fill="#f0f0f0"/>
<g opacity=".55"><path d="M80 933Q88 924 96 933Q88 942 80 933Z" fill="#cfcfcf"/><circle cx="88" cy="933" r="2.8" fill="#f0f0f0"/><path d="M82 927L94 939" stroke="#f0f0f0" stroke-width="3"/><path d="M81.5 928L93 939.5" stroke="#cfcfcf" stroke-width="1.4"/></g>
<rect x="105.4" y="925.4" width="15.2" height="15.2" rx="4.2" fill="#fff" stroke="#2f3338" stroke-width="1.5"/><path d="M108.4 931.6H117.60000000000001V938.4Q113.0 940.1999999999999 108.4 938.4Z" fill="url(#bodyg)"/>
</svg>
<div class="bt" style="left:153px;top:38px;color:#222;letter-spacing:-.13px" id="r0">Linker Flügel innen (3)</div>
<div class="bt" style="left:153px;top:62px;color:#222" id="r1">Körper73</div>
<div class="bt" style="left:153px;top:86px;color:#222;letter-spacing:-.13px" id="r2">Rechter Flügel innen (2)</div>
<div class="bt" style="left:153px;top:110px;color:#222" id="r3">Körper85</div>
<div class="bt" style="left:153px;top:134px;color:#222;letter-spacing:-.13px" id="r4">Rechter Flügel innen (3)</div>
<div class="bt" style="left:153px;top:158px;color:#222;letter-spacing:-.13px" id="r5">Linker Flügel innen (4)</div>
<div class="bt" style="left:153px;top:182px;color:#222" id="r6">Körper97</div>
<div class="bt" style="left:153px;top:206px;color:#222" id="r7">Körper98</div>
<div class="bt" style="left:153px;top:230px;color:#222" id="r8">Anschlussrippe Gegenstück</div>
<div class="bt" style="left:153px;top:254px;color:#222" id="r9">Anschlussrippe 4</div>
<div class="bt" style="left:153px;top:278px;color:#fff;letter-spacing:-.13px" id="r10">Rechter Flügel innen (4)</div>
<div class="bt" style="left:153px;top:302px;color:#222" id="r11">Körper102</div>
<div class="bt" style="left:153px;top:326px;color:#222" id="r12">Anschlussrippe 4 (1)</div>
<div class="bt" style="left:153px;top:350px;color:#222;letter-spacing:-.13px" id="r13">Linker Flügel Anschlussres:...</div>
<div class="bt" style="left:153px;top:374px;color:#222" id="r14">Gegenstück 5 R1</div>
<div class="bt" style="left:153px;top:398px;color:#222;letter-spacing:-.13px" id="r15">Linker Flügel innen (5)</div>
<div class="bt" style="left:153px;top:422px;color:#222" id="r16">Gegenstück 5R2</div>
<div class="bt" style="left:153px;top:446px;color:#222;letter-spacing:-.13px" id="r17">Rechter Flügel innen (5)</div>
<div class="bt" style="left:153px;top:470px;color:#222" id="r18">Körper118</div>
<div class="bt" style="left:153px;top:494px;color:#222" id="r19">Körper121</div>
<div class="bt" style="left:153px;top:518px;color:#222" id="r20">Körper125</div>
<div class="bt" style="left:153px;top:542px;color:#222" id="r21">Körper126</div>
<div class="bt" style="left:153px;top:566px;color:#222" id="r22">Körper128</div>
<div class="bt" style="left:153px;top:590px;color:#222;letter-spacing:-.13px" id="r23">Rechter Flügel innen (1)</div>
<div class="bt" style="left:153px;top:614px;color:#222;letter-spacing:-.13px" id="r24">Rechter Flügel innen</div>
<div class="bt" style="left:135px;top:638px;letter-spacing:-.1px" id="s0">Seitenleitwerk (11)</div>
<div class="bt" style="left:135px;top:662px;letter-spacing:-.1px" id="s1">HLW-Profil-Mitte (1)</div>
<div class="bt" style="left:135px;top:686px;letter-spacing:-.1px" id="s2">HLW-Profil korrigiert (1)</div>
<div class="bt" style="left:135px;top:710px;letter-spacing:-.1px" id="s3">Höhenleitwerk</div>
<div class="bt" style="left:135px;top:734px;letter-spacing:-.1px" id="s4">Rumpfspitze</div>
<div class="bt" style="left:135px;top:758px;letter-spacing:-.1px" id="s5">Rumpfvorderteil</div>
<div class="bt" style="left:135px;top:782px;letter-spacing:-.1px" id="s6">Rumpfhaube vorn</div>
<div class="abs" style="left:30px;top:11.5px;font-size:10px;color:#555;letter-spacing:.05px" id="bh">BROWSER</div>
<div class="abs" style="left:30px;top:828.5px;font-size:10px;color:#555;letter-spacing:-.15px" id="kh">KOMMENTARE</div>
<!--/BROWSER-->
<!--MISC-->
<svg class="abs" style="left:0;top:-144px" width="1920" height="1080" viewBox="0 0 1920 1080">
<defs><filter id="sh" x="-30%" y="-30%" width="160%" height="160%"><feGaussianBlur stdDeviation="4"/></filter></defs>
<polygon points="1830,232 1878,226 1886,244 1842,250" fill="#777" opacity=".35" filter="url(#sh)"/>
<polygon points="1825,179.4 1872.2,172.2 1873.9,214.4 1821.7,220.6" fill="#eeeeee" fill-opacity=".92" stroke="#8a8a8a" stroke-width=".6" stroke-dasharray="5 2" stroke-linejoin="round"/>
<polygon points="1821.7,220.6 1873.9,214.4 1881.7,236.7 1837.8,241.1" fill="#e9e9e9" fill-opacity=".92" stroke="#8a8a8a" stroke-width=".6" stroke-dasharray="5 2" stroke-linejoin="round"/>
<polygon points="1872.2,172.2 1880,198.9 1881.7,236.7 1873.9,214.4" fill="#e2e2e2" fill-opacity=".9" stroke="#8a8a8a" stroke-width=".6" stroke-dasharray="3 2"/>
<rect x="1831" y="208" width="33" height="11" fill="#e3e6ee" opacity=".8" transform="rotate(-6 1847 213)"/>
<text transform="translate(1847.5,195) rotate(172) skewX(-8)" text-anchor="middle" font-family="Liberation Sans, sans-serif" font-weight="bold" font-size="9.5" fill="#8d939c" dominant-baseline="middle">OBEN</text>
<text transform="translate(1854,230.5) rotate(-7) skewX(28) scale(1,.62)" text-anchor="middle" font-family="Liberation Sans, sans-serif" font-weight="bold" font-size="9.5" fill="#8d939c" dominant-baseline="middle">HINTEN</text>
<path d="M1871.7 166.7L1880 198.9" stroke="#5c5cf2" stroke-width="1.6"/><path d="M1880 198.9L1882.8 244.4" stroke="#7be07b" stroke-width="1.6"/>
<text x="1869.5" y="165.5" text-anchor="middle" font-family="Liberation Sans, sans-serif" font-size="13" fill="#7878f5">Z</text>
<text x="1883" y="256.5" text-anchor="middle" font-family="Liberation Sans, sans-serif" font-size="13" fill="#7be07b">Y</text>
<rect x="839.8" y="966.5" width="237.3" height="24.4" fill="#f3f3f3"/>
<ellipse cx="850.5" cy="978.5" rx="3.6" ry="7.5" fill="none" stroke="#444" stroke-width="1"/><ellipse cx="851" cy="978.5" rx="7.3" ry="3.4" fill="none" stroke="#444" stroke-width="1" stroke-dasharray="16 5"/><path d="M850 975.5v6M847 978.5h6" stroke="#1a7fe0" stroke-width="1.2"/><path d="M864 976.5h6l-3 4z" fill="#222"/>
<rect x="876.5" y="975.5" width="15" height="10.5" fill="#f3f3f3" stroke="#444" stroke-width="1"/><rect x="879" y="979.5" width="10" height="4" fill="#a9b4c6" stroke="#444" stroke-width=".8"/><path d="M877 975l4-3.500 2 2 5-2v3.500" fill="#9aa" stroke="#444" stroke-width=".8"/>
<path d="M905 980l-2.500-3q1-1.500 2.500 0l1.500 1.500v-6q1-1.200 2 0v-1.500q1-1.200 2 0v1q1-1.200 2 0v1.500q1-1 2 0v7q0 5-4 6h-3q-3-1-4-4z" fill="#f7f7f7" stroke="#444" stroke-width=".9" stroke-linejoin="round"/>
<circle cx="932.5" cy="977.500" r="4.800" fill="#dfe9f5" stroke="#444" stroke-width="1.1"/><path d="M936 981.500l4.500 4.500" stroke="#444" stroke-width="2.2"/><path d="M939.500 974h4M941.500 972v4M939.500 978h4" stroke="#333" stroke-width="1"/>
<circle cx="959.500" cy="977.500" r="5.800" fill="#f3f3f3" stroke="#444" stroke-width="1.300"/><rect x="956.500" y="974.500" width="6" height="6" fill="#dde" stroke="#444" stroke-width=".9"/><path d="M963.500 982l5.500 5" stroke="#444" stroke-width="2.200"/><path d="M975 976.5h6l-3 4z" fill="#222"/>
<rect x="987.500" y="971.500" width="15" height="11.500" rx="1" fill="#a8c4e8" stroke="#445" stroke-width="1.300"/><path d="M992 985.500h6M995 983v2.500" stroke="#666" stroke-width="1.300"/><path d="M1005 976.5h6l-3 4z" fill="#222"/>
<rect x="1018.500" y="971.500" width="15" height="14.500" fill="#b5bac6" stroke="#444" stroke-width="1"/><path d="M1021.500 971.500v14.500M1024.500 971.500v14.500M1027.500 971.500v14.500M1030.500 971.500v14.500M1018.500 974.500h15M1018.500 977.500h15M1018.500 980.500h15M1018.500 983.500h15" stroke="#eef" stroke-width=".7"/><path d="M1036.5 976.5h6l-3 4z" fill="#222"/>
<rect x="1049.500" y="972.500" width="14" height="12" rx="1" fill="#8aa6d8" stroke="#34508a" stroke-width="1.200"/><path d="M1056.500 972.500v12M1049.500 978.500h14" stroke="#34508a" stroke-width="1.200"/><path d="M1051.500 974.500h3.500v2.500h-3.500zM1058.500 974.500h3.500v2.500h-3.500zM1051.500 980.500h3.500v2.500h-3.500zM1058.500 980.500h3.500v2.500h-3.500z" fill="#b8cdf0"/><path d="M1067 976.5h6l-3 4z" fill="#222"/>
</svg>
<!--/MISC-->
  </div>
  <div id="timeline">
<!--TL-->
<svg class="abs" style="left:0;top:-996px" width="1920" height="1080" viewBox="0 0 1920 1080">
<rect x="5" y="996.500" width="30" height="6" rx="3" fill="#c7c7c7"/>
<rect x="145" y="1004" width="1724" height="6" fill="#ffafaf"/>
<g fill="#444"><rect x="11.700" y="1018" width="2" height="14"/><path d="M24 1018v14l-10-7z"/><path d="M46 1018.500v13l-10-6.500z"/><rect x="47" y="1022" width="2" height="6"/><path d="M62 1017.500v15l11.500-7.500z"/><rect x="86" y="1022" width="2" height="6"/><path d="M89 1018.500v13l10-6.500z"/><path d="M112 1018v14l10-7z"/><rect x="122" y="1018" width="2" height="14"/></g>
<g transform="translate(155,1020)"><path d="M-7 -6.500H4.500M-7 -6.500V5.500M5 -6V1M-7 5.500H0" stroke="#444" stroke-width="1.1" stroke-dasharray="4.5 1.6" fill="none"/><rect x="-8" y="-7.500" width="2" height="2" fill="#1a7fe8"/><rect x="4" y="-7.500" width="2" height="2" fill="#1a7fe8"/><rect x="-8" y="4.500" width="2" height="2" fill="#1a7fe8"/><path d="M1.500 7.500L2.200 4.800 6.300 .7 8.300 2.700 4.200 6.800Z" fill="#f3c04d"/><path d="M6.300 .7L7.300 -.3Q8.300 -.8 8.900 .3L9.300 1.700 8.300 2.700Z" fill="#f43030"/><path d="M1.500 7.500L2.200 4.800 4.200 6.800Z" fill="#555"/></g>
<g transform="translate(179,1020)"><path d="M-8 -8H8V7.500H3Q2 7.500 2 6.500V2Q2 0 0 0H-7Q-8 0 -8 -1Z" fill="#fcb581" stroke="#f0a064" stroke-width=".6"/></g>
<g transform="translate(203,1020)"><polygon points="-7,-2.5 -2.5,-7.5 1.5,-7.5 -2.5,-2.5 -2.5,7.5 -7,7.5" fill="#dcdcdc" stroke="#555" stroke-width=".9"/><polygon points="-2.5,-2.5 2.5,-7.5 2.5,2.5 -2.5,7.5" fill="#5dbb7c"/><polygon points="4,-2 8,-7 8,2.5 4,7.5" fill="#e29660"/></g>
<g transform="translate(227,1020)"><path d="M-7 -6.500H4.500M-7 -6.500V5.500M5 -6V1M-7 5.500H0" stroke="#444" stroke-width="1.1" stroke-dasharray="4.5 1.6" fill="none"/><rect x="-8" y="-7.500" width="2" height="2" fill="#1a7fe8"/><rect x="4" y="-7.500" width="2" height="2" fill="#1a7fe8"/><rect x="-8" y="4.500" width="2" height="2" fill="#1a7fe8"/><path d="M1.500 7.500L2.200 4.800 6.300 .7 8.300 2.700 4.200 6.800Z" fill="#f3c04d"/><path d="M6.300 .7L7.300 -.3Q8.300 -.8 8.900 .3L9.300 1.700 8.300 2.700Z" fill="#f43030"/><path d="M1.500 7.500L2.200 4.800 4.200 6.800Z" fill="#555"/></g>
<g transform="translate(251,1020)"><path d="M-8 -8H8V7.500H3Q2 7.500 2 6.500V2Q2 0 0 0H-7Q-8 0 -8 -1Z" fill="#fcb581" stroke="#f0a064" stroke-width=".6"/></g>
<g transform="translate(275,1020)"><path d="M-8 -8H8V8H1V-1H-8Z" fill="#6aaee4"/><rect x="-7" y="1.500" width="6" height="6" fill="#f4f4f4" stroke="#444" stroke-width="1.1"/></g>
<g transform="translate(299,1020)"><path d="M0 -5V5M-5 0H5" stroke="#2c2c2c" stroke-width="1.5"/><path d="M0 -8l3 3.600h-6zM0 8l3-3.600h-6zM-8 0l3.600-3v6zM8 0l-3.600-3v6z" fill="#2c2c2c"/></g>
<g transform="translate(323,1020)"><path d="M0 -5V5M-5 0H5" stroke="#2c2c2c" stroke-width="1.5"/><path d="M0 -8l3 3.600h-6zM0 8l3-3.600h-6zM-8 0l3.600-3v6zM8 0l-3.600-3v6z" fill="#2c2c2c"/></g>
<g transform="translate(347,1020)"><path d="M-7 -6.500H4.500M-7 -6.500V5.500M5 -6V1M-7 5.500H0" stroke="#444" stroke-width="1.1" stroke-dasharray="4.5 1.6" fill="none"/><rect x="-8" y="-7.500" width="2" height="2" fill="#1a7fe8"/><rect x="4" y="-7.500" width="2" height="2" fill="#1a7fe8"/><rect x="-8" y="4.500" width="2" height="2" fill="#1a7fe8"/><path d="M1.500 7.500L2.200 4.800 6.300 .7 8.300 2.700 4.200 6.800Z" fill="#f3c04d"/><path d="M6.300 .7L7.300 -.3Q8.300 -.8 8.900 .3L9.300 1.700 8.300 2.700Z" fill="#f43030"/><path d="M1.500 7.500L2.200 4.800 4.200 6.800Z" fill="#555"/></g>
<g transform="translate(371,1020)"><polygon points="-7,-2.5 -2.5,-7.5 1.5,-7.5 -2.5,-2.5 -2.5,7.5 -7,7.5" fill="#dcdcdc" stroke="#555" stroke-width=".9"/><polygon points="-2.5,-2.5 2.5,-7.5 2.5,2.5 -2.5,7.5" fill="#5dbb7c"/><polygon points="4,-2 8,-7 8,2.5 4,7.5" fill="#e29660"/></g>
<g transform="translate(395,1020)"><polygon points="-7,-2.5 -2.5,-7.5 1.5,-7.5 -2.5,-2.5 -2.5,7.5 -7,7.5" fill="#dcdcdc" stroke="#555" stroke-width=".9"/><polygon points="-2.5,-2.5 2.5,-7.5 2.5,2.5 -2.5,7.5" fill="#5dbb7c"/><polygon points="4,-2 8,-7 8,2.5 4,7.5" fill="#e29660"/></g>
<g transform="translate(419,1020)"><polygon points="-7,-2.5 -2.5,-7.5 1.5,-7.5 -2.5,-2.5 -2.5,7.5 -7,7.5" fill="#dcdcdc" stroke="#555" stroke-width=".9"/><polygon points="-2.5,-2.5 2.5,-7.5 2.5,2.5 -2.5,7.5" fill="#5dbb7c"/><polygon points="4,-2 8,-7 8,2.5 4,7.5" fill="#e29660"/></g>
<g transform="translate(443,1020)"><path d="M-7 -6.500H4.500M-7 -6.500V5.500M5 -6V1M-7 5.500H0" stroke="#444" stroke-width="1.1" stroke-dasharray="4.5 1.6" fill="none"/><rect x="-8" y="-7.500" width="2" height="2" fill="#1a7fe8"/><rect x="4" y="-7.500" width="2" height="2" fill="#1a7fe8"/><rect x="-8" y="4.500" width="2" height="2" fill="#1a7fe8"/><path d="M1.500 7.500L2.200 4.800 6.300 .7 8.300 2.700 4.200 6.800Z" fill="#f3c04d"/><path d="M6.300 .7L7.300 -.3Q8.300 -.8 8.900 .3L9.300 1.700 8.300 2.700Z" fill="#f43030"/><path d="M1.500 7.500L2.200 4.800 4.200 6.800Z" fill="#555"/></g>
<g transform="translate(467,1020)"><path d="M-7 -6.500H4.500M-7 -6.500V5.500M5 -6V1M-7 5.500H0" stroke="#444" stroke-width="1.1" stroke-dasharray="4.5 1.6" fill="none"/><rect x="-8" y="-7.500" width="2" height="2" fill="#1a7fe8"/><rect x="4" y="-7.500" width="2" height="2" fill="#1a7fe8"/><rect x="-8" y="4.500" width="2" height="2" fill="#1a7fe8"/><path d="M1.500 7.500L2.200 4.800 6.300 .7 8.300 2.700 4.200 6.800Z" fill="#f3c04d"/><path d="M6.300 .7L7.300 -.3Q8.300 -.8 8.900 .3L9.300 1.700 8.300 2.700Z" fill="#f43030"/><path d="M1.500 7.500L2.200 4.800 4.200 6.800Z" fill="#555"/></g>
<rect x="479" y="1008" width="24" height="23.500" rx="3" fill="#e6e61e"/>
<g transform="translate(491,1020)"><path d="M-5.500 -2L1 -6.500 5.500 2 -1 6.500Z" fill="none" stroke="#d38a4a" stroke-width="1.800"/><path d="M-3 -1.500H3.500V5H-3Z" fill="none" stroke="#444" stroke-width="1"/><path d="M-2 -1L1 -3.500 4 -1 4 2.500 1 4.500-2 2.500Z" fill="#e4e4e4"/><path d="M-3.500 -.5L0 -4.500" stroke="#4fc04f" stroke-width="1.200"/></g>
<g transform="translate(515,1020)"><path d="M-7 -6.500H4.500M-7 -6.500V5.500M5 -6V1M-7 5.500H0" stroke="#444" stroke-width="1.1" stroke-dasharray="4.5 1.6" fill="none"/><rect x="-8" y="-7.500" width="2" height="2" fill="#1a7fe8"/><rect x="4" y="-7.500" width="2" height="2" fill="#1a7fe8"/><rect x="-8" y="4.500" width="2" height="2" fill="#1a7fe8"/><path d="M1.500 7.500L2.200 4.800 6.300 .7 8.300 2.700 4.200 6.800Z" fill="#f3c04d"/><path d="M6.300 .7L7.300 -.3Q8.300 -.8 8.900 .3L9.300 1.700 8.300 2.700Z" fill="#f43030"/><path d="M1.500 7.500L2.200 4.800 4.200 6.800Z" fill="#555"/></g>
<g transform="translate(539,1020)"><path d="M-7 -6.500H4.500M-7 -6.500V5.500M5 -6V1M-7 5.500H0" stroke="#444" stroke-width="1.1" stroke-dasharray="4.5 1.6" fill="none"/><rect x="-8" y="-7.500" width="2" height="2" fill="#1a7fe8"/><rect x="4" y="-7.500" width="2" height="2" fill="#1a7fe8"/><rect x="-8" y="4.500" width="2" height="2" fill="#1a7fe8"/><path d="M1.500 7.500L2.200 4.800 6.300 .7 8.300 2.700 4.200 6.800Z" fill="#f3c04d"/><path d="M6.300 .7L7.300 -.3Q8.300 -.8 8.900 .3L9.300 1.700 8.300 2.700Z" fill="#f43030"/><path d="M1.500 7.500L2.200 4.800 4.200 6.800Z" fill="#555"/></g>
<g transform="translate(563,1020)"><path d="M-7 -6.500H4.500M-7 -6.500V5.500M5 -6V1M-7 5.500H0" stroke="#444" stroke-width="1.1" stroke-dasharray="4.5 1.6" fill="none"/><rect x="-8" y="-7.500" width="2" height="2" fill="#1a7fe8"/><rect x="4" y="-7.500" width="2" height="2" fill="#1a7fe8"/><rect x="-8" y="4.500" width="2" height="2" fill="#1a7fe8"/><path d="M1.500 7.500L2.200 4.800 6.300 .7 8.300 2.700 4.200 6.800Z" fill="#f3c04d"/><path d="M6.300 .7L7.300 -.3Q8.300 -.8 8.900 .3L9.300 1.700 8.300 2.700Z" fill="#f43030"/><path d="M1.500 7.500L2.200 4.800 4.200 6.800Z" fill="#555"/></g>
<g transform="translate(587,1020)"><polygon points="-8,-7.5 8,-7.5 8,2 5,4.5 -5,4.5 -8,2" fill="#4a93cf"/><polygon points="-8,-7.5 8,-7.5 3.5,-1 -3.5,-1" fill="#8fcbf8"/><circle cx="0" cy="3.800" r="3.800" fill="#fff" stroke="#444" stroke-width="1.100"/></g>
<g transform="translate(611,1020)"><path d="M-7 -6.500H4.500M-7 -6.500V5.500M5 -6V1M-7 5.500H0" stroke="#444" stroke-width="1.1" stroke-dasharray="4.5 1.6" fill="none"/><rect x="-8" y="-7.500" width="2" height="2" fill="#1a7fe8"/><rect x="4" y="-7.500" width="2" height="2" fill="#1a7fe8"/><rect x="-8" y="4.500" width="2" height="2" fill="#1a7fe8"/><path d="M1.500 7.500L2.200 4.800 6.300 .7 8.300 2.700 4.200 6.800Z" fill="#f3c04d"/><path d="M6.300 .7L7.300 -.3Q8.300 -.8 8.900 .3L9.300 1.700 8.300 2.700Z" fill="#f43030"/><path d="M1.500 7.500L2.200 4.800 4.200 6.800Z" fill="#555"/></g>
<g transform="translate(635,1020)"><polygon points="-7,-2.5 -2.5,-7.5 1.5,-7.5 -2.5,-2.5 -2.5,7.5 -7,7.5" fill="#dcdcdc" stroke="#555" stroke-width=".9"/><polygon points="-2.5,-2.5 2.5,-7.5 2.5,2.5 -2.5,7.5" fill="#5dbb7c"/><polygon points="4,-2 8,-7 8,2.5 4,7.5" fill="#e29660"/></g>
<rect x="647" y="1008" width="24" height="23.500" rx="3" fill="#e6e61e"/>
<g transform="translate(659,1020)"><path d="M-5 -4L3 -6.500 6.500 1 -1 5Z" fill="#e09a5c"/><path d="M-3 -2H3V4.500H-3Z" fill="#e2e2e2"/><rect x="-4.500" y="-3" width="2.200" height="2.200" fill="#22a040"/><rect x="3" y="-5.500" width="2.200" height="2.200" fill="#22a040"/><rect x="1" y="3" width="2.200" height="2.200" fill="#22a040"/><rect x="-2.500" y="4.500" width="2" height="2" fill="#22a040"/></g>
<g transform="translate(683,1020)"><path d="M-7 -6.500H4.500M-7 -6.500V5.500M5 -6V1M-7 5.500H0" stroke="#444" stroke-width="1.1" stroke-dasharray="4.5 1.6" fill="none"/><rect x="-8" y="-7.500" width="2" height="2" fill="#1a7fe8"/><rect x="4" y="-7.500" width="2" height="2" fill="#1a7fe8"/><rect x="-8" y="4.500" width="2" height="2" fill="#1a7fe8"/><path d="M1.500 7.500L2.200 4.800 6.300 .7 8.300 2.700 4.200 6.800Z" fill="#f3c04d"/><path d="M6.300 .7L7.300 -.3Q8.300 -.8 8.900 .3L9.300 1.700 8.300 2.700Z" fill="#f43030"/><path d="M1.500 7.500L2.200 4.800 4.200 6.800Z" fill="#555"/></g>
<g transform="translate(707,1020)"><polygon points="-8,-7.5 8,-7.5 8,2 5,4.5 -5,4.5 -8,2" fill="#4a93cf"/><polygon points="-8,-7.5 8,-7.5 3.5,-1 -3.5,-1" fill="#8fcbf8"/><circle cx="0" cy="3.800" r="3.800" fill="#fff" stroke="#444" stroke-width="1.100"/></g>
<g transform="translate(731,1020)"><polygon points="-7,-3.5 4,-3.5 4,0.5 -7,0.5" fill="#6aaee4"/><polygon points="-7,-3.5 -4,-7 7.5,-7 4,-3.5" fill="#8fcbf8"/><polygon points="4,-3.5 7.5,-7 7.5,-3 4,0.5" fill="#4a93cf"/><path d="M-8 2.200H4L8 -1.800" stroke="#1a8fe0" stroke-width="1" fill="none"/><polygon points="-7,3.5 4,3.5 4,7.5 -7,7.5" fill="#dcdcdc" stroke="#555" stroke-width=".8"/><polygon points="4,3.5 7.5,0 7.5,4 4,7.5" fill="#b8b8b8" stroke="#555" stroke-width=".8"/></g>
<g transform="translate(755,1020)"><path d="M-7 -6.500H4.500M-7 -6.500V5.500M5 -6V1M-7 5.500H0" stroke="#444" stroke-width="1.1" stroke-dasharray="4.5 1.6" fill="none"/><rect x="-8" y="-7.500" width="2" height="2" fill="#1a7fe8"/><rect x="4" y="-7.500" width="2" height="2" fill="#1a7fe8"/><rect x="-8" y="4.500" width="2" height="2" fill="#1a7fe8"/><path d="M1.500 7.500L2.200 4.800 6.300 .7 8.300 2.700 4.200 6.800Z" fill="#f3c04d"/><path d="M6.300 .7L7.300 -.3Q8.300 -.8 8.900 .3L9.300 1.700 8.300 2.700Z" fill="#f43030"/><path d="M1.500 7.500L2.200 4.800 4.200 6.800Z" fill="#555"/></g>
<g transform="translate(779,1020)"><polygon points="-7,5.5 2,5.5 5,2.5 5,4.5 2,7.8 -7,7.8" fill="#c4c4c4"/><polygon points="-7,-4.5 2,-4.5 2,5.5 -7,5.5" fill="#6aaee4"/><polygon points="-7,-4.5 -4,-7.5 5,-7.5 2,-4.5" fill="#8fcbf8"/><polygon points="2,-4.5 5,-7.5 5,2.5 2,5.5" fill="#4a93cf"/><path d="M7 5V-5.500" stroke="#222" stroke-width="1"/><path d="M7 -7.500l1.600 2.800h-3.200z" fill="#222"/></g>
<g transform="translate(803,1020)"><polygon points="-7,5.5 2,5.5 5,2.5 5,4.5 2,7.8 -7,7.8" fill="#c4c4c4"/><polygon points="-7,-4.5 2,-4.5 2,5.5 -7,5.5" fill="#6aaee4"/><polygon points="-7,-4.5 -4,-7.5 5,-7.5 2,-4.5" fill="#8fcbf8"/><polygon points="2,-4.5 5,-7.5 5,2.5 2,5.5" fill="#4a93cf"/><path d="M7 5V-5.500" stroke="#222" stroke-width="1"/><path d="M7 -7.500l1.600 2.800h-3.200z" fill="#222"/></g>
<g transform="translate(827,1020)"><path d="M-7.500 7.500V-4L-4 -7.500H1.500L-1.500 -4.500Q4 -3.500 4 2.500V7.500Z" fill="#dcdcdc" stroke="#555" stroke-width=".9" stroke-linejoin="round"/><path d="M4 2.500L7.500 -1V4L4 7.500Z" fill="#b8b8b8" stroke="#555" stroke-width=".9"/><path d="M-1.500 -4.500L1.500 -7.500Q7.500 -6 7.500 -1L4.500 2Q4 -3.500 -1.500 -4.500Z" fill="#6aaee4"/></g>
<g transform="translate(851,1020)"><path d="M-7.500 7.500V-4L-4 -7.500H1.500L-1.500 -4.500Q4 -3.500 4 2.500V7.500Z" fill="#dcdcdc" stroke="#555" stroke-width=".9" stroke-linejoin="round"/><path d="M4 2.500L7.500 -1V4L4 7.500Z" fill="#b8b8b8" stroke="#555" stroke-width=".9"/><path d="M-1.500 -4.500L1.500 -7.500Q7.500 -6 7.500 -1L4.500 2Q4 -3.500 -1.500 -4.500Z" fill="#6aaee4"/></g>
<g transform="translate(875,1020)"><polygon points="-7,-2.5 -2.5,-7.5 1.5,-7.5 -2.5,-2.5 -2.5,7.5 -7,7.5" fill="#dcdcdc" stroke="#555" stroke-width=".9"/><polygon points="-2.5,-2.5 2.5,-7.5 2.5,2.5 -2.5,7.5" fill="#5dbb7c"/><polygon points="4,-2 8,-7 8,2.5 4,7.5" fill="#e29660"/></g>
<g transform="translate(899,1020)"><path d="M-7 -6.500H4.500M-7 -6.500V5.500M5 -6V1M-7 5.500H0" stroke="#444" stroke-width="1.1" stroke-dasharray="4.5 1.6" fill="none"/><rect x="-8" y="-7.500" width="2" height="2" fill="#1a7fe8"/><rect x="4" y="-7.500" width="2" height="2" fill="#1a7fe8"/><rect x="-8" y="4.500" width="2" height="2" fill="#1a7fe8"/><path d="M1.500 7.500L2.200 4.800 6.300 .7 8.300 2.700 4.200 6.800Z" fill="#f3c04d"/><path d="M6.300 .7L7.300 -.3Q8.300 -.8 8.900 .3L9.300 1.700 8.300 2.700Z" fill="#f43030"/><path d="M1.500 7.500L2.200 4.800 4.200 6.800Z" fill="#555"/></g>
<g transform="translate(923,1020)"><polygon points="-7,5.5 2,5.5 5,2.5 5,4.5 2,7.8 -7,7.8" fill="#c4c4c4"/><polygon points="-7,-4.5 2,-4.5 2,5.5 -7,5.5" fill="#6aaee4"/><polygon points="-7,-4.5 -4,-7.5 5,-7.5 2,-4.5" fill="#8fcbf8"/><polygon points="2,-4.5 5,-7.5 5,2.5 2,5.5" fill="#4a93cf"/><path d="M7 5V-5.500" stroke="#222" stroke-width="1"/><path d="M7 -7.500l1.600 2.800h-3.200z" fill="#222"/></g>
<rect x="935" y="1008" width="24" height="23.500" rx="3" fill="#e6e61e"/>
<g transform="translate(947,1020)"><path d="M0 -5V5M-5 0H5" stroke="#2c2c2c" stroke-width="1.5"/><path d="M0 -8l3 3.600h-6zM0 8l3-3.600h-6zM-8 0l3.600-3v6zM8 0l-3.600-3v6z" fill="#2c2c2c"/></g>
<g transform="translate(971,1020)"><polygon points="-3,-7.5 7,-7.5 7,1 -3,1" fill="#4a93cf"/><polygon points="-3,-7.5 7,-7.5 5,-6 -3,-6" fill="#8fcbf8"/><rect x="-7.500" y="-4.500" width="11" height="11.500" fill="#f4f4f4" stroke="#444" stroke-width="1"/><rect x="-5.500" y="-2.500" width="7" height="7.500" fill="none" stroke="#444" stroke-width="1"/></g>
<g transform="translate(995,1020)"><polygon points="-2.5,-5 6,-5 6,3 -2.5,3" fill="#6aaee4"/><polygon points="-2.5,-5 -0.8,-7.5 8,-7.5 6,-5" fill="#8fcbf8"/><polygon points="6,-5 8,-7.5 8,1 6,3" fill="#4a93cf"/><polygon points="-8,-0.5 1,-0.5 1,7.5 -8,7.5" fill="#6aaee4"/><polygon points="-8,-0.5 -6.3,-2.8 -2.5,-2.8 -2.5,-0.5" fill="#8fcbf8"/><polygon points="1,3 3,3 3,5.5 1,7.5" fill="#4a93cf"/></g>
<g transform="translate(1019,1020)"><path d="M-7 -6.500H4.500M-7 -6.500V5.500M5 -6V1M-7 5.500H0" stroke="#444" stroke-width="1.1" stroke-dasharray="4.5 1.6" fill="none"/><rect x="-8" y="-7.500" width="2" height="2" fill="#1a7fe8"/><rect x="4" y="-7.500" width="2" height="2" fill="#1a7fe8"/><rect x="-8" y="4.500" width="2" height="2" fill="#1a7fe8"/><path d="M1.500 7.500L2.200 4.800 6.300 .7 8.300 2.700 4.200 6.800Z" fill="#f3c04d"/><path d="M6.300 .7L7.300 -.3Q8.300 -.8 8.900 .3L9.300 1.700 8.300 2.700Z" fill="#f43030"/><path d="M1.500 7.500L2.200 4.800 4.200 6.800Z" fill="#555"/></g>
<g transform="translate(1043,1020)"><path d="M-8 -8H8V7.500H3Q2 7.500 2 6.500V2Q2 0 0 0H-7Q-8 0 -8 -1Z" fill="#fcb581" stroke="#f0a064" stroke-width=".6"/></g>
<g transform="translate(1067,1020)"><path d="M-8 -8H8V8H1V-1H-8Z" fill="#6aaee4"/><rect x="-7" y="1.500" width="6" height="6" fill="#f4f4f4" stroke="#444" stroke-width="1.1"/></g>
<g transform="translate(1091,1020)"><path d="M-7 -6.500H4.500M-7 -6.500V5.500M5 -6V1M-7 5.500H0" stroke="#444" stroke-width="1.1" stroke-dasharray="4.5 1.6" fill="none"/><rect x="-8" y="-7.500" width="2" height="2" fill="#1a7fe8"/><rect x="4" y="-7.500" width="2" height="2" fill="#1a7fe8"/><rect x="-8" y="4.500" width="2" height="2" fill="#1a7fe8"/><path d="M1.500 7.500L2.200 4.800 6.300 .7 8.300 2.700 4.200 6.800Z" fill="#f3c04d"/><path d="M6.300 .7L7.300 -.3Q8.300 -.8 8.900 .3L9.300 1.700 8.300 2.700Z" fill="#f43030"/><path d="M1.500 7.500L2.200 4.800 4.200 6.800Z" fill="#555"/></g>
<g transform="translate(1115,1020)"><path d="M-7.800 -1Q0 -8 7.800 -1.200L5 1.500Q0 -3.500 -5 1.700Z" fill="#8fcbf8"/><path d="M-7.800 -1L-5 1.700V6.500L-7.800 3.500Z" fill="#4a93cf"/><path d="M-5 1.700Q0 -3.500 5 1.500V6.500Q0 2 -5 6.500Z" fill="#6aaee4"/><path d="M7.800 -1.200V3.500L5 6.500V1.500Z" fill="#fff" stroke="#444" stroke-width=".9"/><path d="M7 -4.500Q0 -10 -6.500 -5" stroke="#222" stroke-width="1" fill="none"/><path d="M-8 -4l3.200-1.800.3 2.800z" fill="#222"/></g>
<rect x="1127" y="1008" width="24" height="23.500" rx="3" fill="#e6e61e"/>
<g transform="translate(1139,1020)"><polygon points="-7.5,-4 4,-4 4,7.5 -7.5,7.5" fill="#6aaee4"/><polygon points="-7.5,-4 -4,-7.5 7.5,-7.5 4,-4" fill="#8fcbf8"/><polygon points="4,-4 7.5,-7.5 7.5,4 4,7.5" fill="#4a93cf"/></g>
<g transform="translate(1163,1020)"><path d="M-7 -6.500H4.500M-7 -6.500V5.500M5 -6V1M-7 5.500H0" stroke="#444" stroke-width="1.1" stroke-dasharray="4.5 1.6" fill="none"/><rect x="-8" y="-7.500" width="2" height="2" fill="#1a7fe8"/><rect x="4" y="-7.500" width="2" height="2" fill="#1a7fe8"/><rect x="-8" y="4.500" width="2" height="2" fill="#1a7fe8"/><path d="M1.500 7.500L2.200 4.800 6.300 .7 8.300 2.700 4.200 6.800Z" fill="#f3c04d"/><path d="M6.300 .7L7.300 -.3Q8.300 -.8 8.900 .3L9.300 1.700 8.300 2.700Z" fill="#f43030"/><path d="M1.500 7.500L2.200 4.800 4.200 6.800Z" fill="#555"/></g>
<g transform="translate(1187,1020)"><polygon points="-7,5.5 2,5.5 5,2.5 5,4.5 2,7.8 -7,7.8" fill="#c4c4c4"/><polygon points="-7,-4.5 2,-4.5 2,5.5 -7,5.5" fill="#6aaee4"/><polygon points="-7,-4.5 -4,-7.5 5,-7.5 2,-4.5" fill="#8fcbf8"/><polygon points="2,-4.5 5,-7.5 5,2.5 2,5.5" fill="#4a93cf"/><path d="M7 5V-5.500" stroke="#222" stroke-width="1"/><path d="M7 -7.500l1.600 2.800h-3.200z" fill="#222"/></g>
<g transform="translate(1211,1020)"><polygon points="-7,5.5 2,5.5 5,2.5 5,4.5 2,7.8 -7,7.8" fill="#c4c4c4"/><polygon points="-7,-4.5 2,-4.5 2,5.5 -7,5.5" fill="#6aaee4"/><polygon points="-7,-4.5 -4,-7.5 5,-7.5 2,-4.5" fill="#8fcbf8"/><polygon points="2,-4.5 5,-7.5 5,2.5 2,5.5" fill="#4a93cf"/><path d="M7 5V-5.500" stroke="#222" stroke-width="1"/><path d="M7 -7.500l1.600 2.800h-3.200z" fill="#222"/></g>
<g transform="translate(1235,1020)"><path d="M0 -5V5M-5 0H5" stroke="#2c2c2c" stroke-width="1.5"/><path d="M0 -8l3 3.600h-6zM0 8l3-3.600h-6zM-8 0l3.600-3v6zM8 0l-3.600-3v6z" fill="#2c2c2c"/></g>
<g transform="translate(1259,1020)"><path d="M0 -5V5M-5 0H5" stroke="#2c2c2c" stroke-width="1.5"/><path d="M0 -8l3 3.600h-6zM0 8l3-3.600h-6zM-8 0l3.600-3v6zM8 0l-3.600-3v6z" fill="#2c2c2c"/></g>
<g transform="translate(1283,1020)"><path d="M0 -5V5M-5 0H5" stroke="#2c2c2c" stroke-width="1.5"/><path d="M0 -8l3 3.600h-6zM0 8l3-3.600h-6zM-8 0l3.600-3v6zM8 0l-3.600-3v6z" fill="#2c2c2c"/></g>
<g transform="translate(1307,1020)"><path d="M0 -5V5M-5 0H5" stroke="#2c2c2c" stroke-width="1.5"/><path d="M0 -8l3 3.600h-6zM0 8l3-3.600h-6zM-8 0l3.600-3v6zM8 0l-3.600-3v6z" fill="#2c2c2c"/></g>
<g transform="translate(1331,1020)"><path d="M0 -5V5M-5 0H5" stroke="#2c2c2c" stroke-width="1.5"/><path d="M0 -8l3 3.600h-6zM0 8l3-3.600h-6zM-8 0l3.600-3v6zM8 0l-3.600-3v6z" fill="#2c2c2c"/></g>
<g transform="translate(1355,1020)"><polygon points="-7,-2.5 -2.5,-7.5 1.5,-7.5 -2.5,-2.5 -2.5,7.5 -7,7.5" fill="#dcdcdc" stroke="#555" stroke-width=".9"/><polygon points="-2.5,-2.5 2.5,-7.5 2.5,2.5 -2.5,7.5" fill="#5dbb7c"/><polygon points="4,-2 8,-7 8,2.5 4,7.5" fill="#e29660"/></g>
<g transform="translate(1379,1020)"><path d="M-7 -6.500H4.500M-7 -6.500V5.500M5 -6V1M-7 5.500H0" stroke="#444" stroke-width="1.1" stroke-dasharray="4.5 1.6" fill="none"/><rect x="-8" y="-7.500" width="2" height="2" fill="#1a7fe8"/><rect x="4" y="-7.500" width="2" height="2" fill="#1a7fe8"/><rect x="-8" y="4.500" width="2" height="2" fill="#1a7fe8"/><path d="M1.500 7.500L2.200 4.800 6.300 .7 8.300 2.700 4.200 6.800Z" fill="#f3c04d"/><path d="M6.300 .7L7.300 -.3Q8.300 -.8 8.900 .3L9.300 1.700 8.300 2.700Z" fill="#f43030"/><path d="M1.500 7.500L2.200 4.800 4.200 6.800Z" fill="#555"/></g>
<g transform="translate(1403,1020)"><polygon points="-7,5.5 2,5.5 5,2.5 5,4.5 2,7.8 -7,7.8" fill="#c4c4c4"/><polygon points="-7,-4.5 2,-4.5 2,5.5 -7,5.5" fill="#6aaee4"/><polygon points="-7,-4.5 -4,-7.5 5,-7.5 2,-4.5" fill="#8fcbf8"/><polygon points="2,-4.5 5,-7.5 5,2.5 2,5.5" fill="#4a93cf"/><path d="M7 5V-5.500" stroke="#222" stroke-width="1"/><path d="M7 -7.500l1.600 2.800h-3.200z" fill="#222"/></g>
<g transform="translate(1427,1020)"><polygon points="-2.5,-5 6,-5 6,3 -2.5,3" fill="#6aaee4"/><polygon points="-2.5,-5 -0.8,-7.5 8,-7.5 6,-5" fill="#8fcbf8"/><polygon points="6,-5 8,-7.5 8,1 6,3" fill="#4a93cf"/><polygon points="-8,-0.5 1,-0.5 1,7.5 -8,7.5" fill="#6aaee4"/><polygon points="-8,-0.5 -6.3,-2.8 -2.5,-2.8 -2.5,-0.5" fill="#8fcbf8"/><polygon points="1,3 3,3 3,5.5 1,7.5" fill="#4a93cf"/></g>
<g transform="translate(1451,1020)"><polygon points="-7,-2.5 -2.5,-7.5 1.5,-7.5 -2.5,-2.5 -2.5,7.5 -7,7.5" fill="#dcdcdc" stroke="#555" stroke-width=".9"/><polygon points="-2.5,-2.5 2.5,-7.5 2.5,2.5 -2.5,7.5" fill="#5dbb7c"/><polygon points="4,-2 8,-7 8,2.5 4,7.5" fill="#e29660"/></g>
<g transform="translate(1475,1020)"><polygon points="-7,-3.5 4,-3.5 4,0.5 -7,0.5" fill="#6aaee4"/><polygon points="-7,-3.5 -4,-7 7.5,-7 4,-3.5" fill="#8fcbf8"/><polygon points="4,-3.5 7.5,-7 7.5,-3 4,0.5" fill="#4a93cf"/><path d="M-8 2.200H4L8 -1.800" stroke="#1a8fe0" stroke-width="1" fill="none"/><polygon points="-7,3.5 4,3.5 4,7.5 -7,7.5" fill="#dcdcdc" stroke="#555" stroke-width=".8"/><polygon points="4,3.5 7.5,0 7.5,4 4,7.5" fill="#b8b8b8" stroke="#555" stroke-width=".8"/></g>
<g transform="translate(1499,1020)"><path d="M-7 -6.500H4.500M-7 -6.500V5.500M5 -6V1M-7 5.500H0" stroke="#444" stroke-width="1.1" stroke-dasharray="4.5 1.6" fill="none"/><rect x="-8" y="-7.500" width="2" height="2" fill="#1a7fe8"/><rect x="4" y="-7.500" width="2" height="2" fill="#1a7fe8"/><rect x="-8" y="4.500" width="2" height="2" fill="#1a7fe8"/><path d="M1.500 7.500L2.200 4.800 6.300 .7 8.300 2.700 4.200 6.800Z" fill="#f3c04d"/><path d="M6.300 .7L7.300 -.3Q8.300 -.8 8.900 .3L9.300 1.700 8.300 2.700Z" fill="#f43030"/><path d="M1.500 7.500L2.200 4.800 4.200 6.800Z" fill="#555"/></g>
<g transform="translate(1523,1020)"><path d="M-7 -6.500H4.500M-7 -6.500V5.500M5 -6V1M-7 5.500H0" stroke="#444" stroke-width="1.1" stroke-dasharray="4.5 1.6" fill="none"/><rect x="-8" y="-7.500" width="2" height="2" fill="#1a7fe8"/><rect x="4" y="-7.500" width="2" height="2" fill="#1a7fe8"/><rect x="-8" y="4.500" width="2" height="2" fill="#1a7fe8"/><path d="M1.500 7.500L2.200 4.800 6.300 .7 8.300 2.700 4.200 6.800Z" fill="#f3c04d"/><path d="M6.300 .7L7.300 -.3Q8.300 -.8 8.900 .3L9.300 1.700 8.300 2.700Z" fill="#f43030"/><path d="M1.500 7.500L2.200 4.800 4.200 6.800Z" fill="#555"/></g>
<g transform="translate(1547,1020)"><polygon points="-3,-5 5,-5 5,2 -3,2" fill="#6aaee4"/><polygon points="-3,-5 -1.3,-7.5 7,-7.5 5,-5" fill="#8fcbf8"/><polygon points="5,-5 7,-7.5 7,0 5,2" fill="#4a93cf"/><rect x="-.5" y="0" width="6.500" height="6.500" fill="#ececec" stroke="#555" stroke-width=".9"/><polygon points="-8,-1 -1,-1 -1,5 -8,5" fill="#6aaee4"/><polygon points="-8,-1 -6.5,-3 -3,-3 -3,-1" fill="#8fcbf8"/></g>
<g transform="translate(1571,1020)"><polygon points="-3,-5 5,-5 5,2 -3,2" fill="#6aaee4"/><polygon points="-3,-5 -1.3,-7.5 7,-7.5 5,-5" fill="#8fcbf8"/><polygon points="5,-5 7,-7.5 7,0 5,2" fill="#4a93cf"/><rect x="-.5" y="0" width="6.500" height="6.500" fill="#ececec" stroke="#555" stroke-width=".9"/><polygon points="-8,-1 -1,-1 -1,5 -8,5" fill="#6aaee4"/><polygon points="-8,-1 -6.5,-3 -3,-3 -3,-1" fill="#8fcbf8"/></g>
<g transform="translate(1595,1020)"><polygon points="-2.5,-5 6,-5 6,3 -2.5,3" fill="#6aaee4"/><polygon points="-2.5,-5 -0.8,-7.5 8,-7.5 6,-5" fill="#8fcbf8"/><polygon points="6,-5 8,-7.5 8,1 6,3" fill="#4a93cf"/><polygon points="-8,-0.5 1,-0.5 1,7.5 -8,7.5" fill="#6aaee4"/><polygon points="-8,-0.5 -6.3,-2.8 -2.5,-2.8 -2.5,-0.5" fill="#8fcbf8"/><polygon points="1,3 3,3 3,5.5 1,7.5" fill="#4a93cf"/></g>
<g transform="translate(1619,1020)"><polygon points="-7,-2.5 -2.5,-7.5 1.5,-7.5 -2.5,-2.5 -2.5,7.5 -7,7.5" fill="#dcdcdc" stroke="#555" stroke-width=".9"/><polygon points="-2.5,-2.5 2.5,-7.5 2.5,2.5 -2.5,7.5" fill="#5dbb7c"/><polygon points="4,-2 8,-7 8,2.5 4,7.5" fill="#e29660"/></g>
<g transform="translate(1643,1020)"><polygon points="-7,-3.5 4,-3.5 4,0.5 -7,0.5" fill="#6aaee4"/><polygon points="-7,-3.5 -4,-7 7.5,-7 4,-3.5" fill="#8fcbf8"/><polygon points="4,-3.5 7.5,-7 7.5,-3 4,0.5" fill="#4a93cf"/><path d="M-8 2.200H4L8 -1.800" stroke="#1a8fe0" stroke-width="1" fill="none"/><polygon points="-7,3.5 4,3.5 4,7.5 -7,7.5" fill="#dcdcdc" stroke="#555" stroke-width=".8"/><polygon points="4,3.5 7.5,0 7.5,4 4,7.5" fill="#b8b8b8" stroke="#555" stroke-width=".8"/></g>
<g transform="translate(1667,1020)"><polygon points="-7,5.5 2,5.5 5,2.5 5,4.5 2,7.8 -7,7.8" fill="#c4c4c4"/><polygon points="-7,-4.5 2,-4.5 2,5.5 -7,5.5" fill="#6aaee4"/><polygon points="-7,-4.5 -4,-7.5 5,-7.5 2,-4.5" fill="#8fcbf8"/><polygon points="2,-4.5 5,-7.5 5,2.5 2,5.5" fill="#4a93cf"/><path d="M7 5V-5.500" stroke="#222" stroke-width="1"/><path d="M7 -7.500l1.600 2.800h-3.200z" fill="#222"/></g>
<g transform="translate(1691,1020)"><polygon points="-7,5.5 2,5.5 5,2.5 5,4.5 2,7.8 -7,7.8" fill="#c4c4c4"/><polygon points="-7,-4.5 2,-4.5 2,5.5 -7,5.5" fill="#6aaee4"/><polygon points="-7,-4.5 -4,-7.5 5,-7.5 2,-4.5" fill="#8fcbf8"/><polygon points="2,-4.5 5,-7.5 5,2.5 2,5.5" fill="#4a93cf"/><path d="M7 5V-5.500" stroke="#222" stroke-width="1"/><path d="M7 -7.500l1.600 2.800h-3.200z" fill="#222"/></g>
<g transform="translate(1715,1020)"><polygon points="-7,5.5 2,5.5 5,2.5 5,4.5 2,7.8 -7,7.8" fill="#c4c4c4"/><polygon points="-7,-4.5 2,-4.5 2,5.5 -7,5.5" fill="#6aaee4"/><polygon points="-7,-4.5 -4,-7.5 5,-7.5 2,-4.5" fill="#8fcbf8"/><polygon points="2,-4.5 5,-7.5 5,2.5 2,5.5" fill="#4a93cf"/><path d="M7 5V-5.500" stroke="#222" stroke-width="1"/><path d="M7 -7.500l1.600 2.800h-3.200z" fill="#222"/></g>
<g transform="translate(1739,1020)"><polygon points="-7,5.5 2,5.5 5,2.5 5,4.5 2,7.8 -7,7.8" fill="#c4c4c4"/><polygon points="-7,-4.5 2,-4.5 2,5.5 -7,5.5" fill="#6aaee4"/><polygon points="-7,-4.5 -4,-7.5 5,-7.5 2,-4.5" fill="#8fcbf8"/><polygon points="2,-4.5 5,-7.5 5,2.5 2,5.5" fill="#4a93cf"/><path d="M7 5V-5.500" stroke="#222" stroke-width="1"/><path d="M7 -7.500l1.600 2.800h-3.200z" fill="#222"/></g>
<g transform="translate(1763,1020)"><polygon points="-7.5,-4 4,-4 4,7.5 -7.5,7.5" fill="#6aaee4"/><polygon points="-7.5,-4 -4,-7.5 7.5,-7.5 4,-4" fill="#8fcbf8"/><polygon points="4,-4 7.5,-7.5 7.5,4 4,7.5" fill="#4a93cf"/></g>
<g transform="translate(1787,1020)"><path d="M0 -5V5M-5 0H5" stroke="#2c2c2c" stroke-width="1.5"/><path d="M0 -8l3 3.600h-6zM0 8l3-3.600h-6zM-8 0l3.600-3v6zM8 0l-3.600-3v6z" fill="#2c2c2c"/></g>
<g transform="translate(1811,1020)"><polygon points="-7,-2.5 -2.5,-7.5 1.5,-7.5 -2.5,-2.5 -2.5,7.5 -7,7.5" fill="#dcdcdc" stroke="#555" stroke-width=".9"/><polygon points="-2.5,-2.5 2.5,-7.5 2.5,2.5 -2.5,7.5" fill="#5dbb7c"/><polygon points="4,-2 8,-7 8,2.5 4,7.5" fill="#e29660"/></g>
<g transform="translate(1835,1020)"><polygon points="-7,5.5 2,5.5 5,2.5 5,4.5 2,7.8 -7,7.8" fill="#c4c4c4"/><polygon points="-7,-4.5 2,-4.5 2,5.5 -7,5.5" fill="#6aaee4"/><polygon points="-7,-4.5 -4,-7.5 5,-7.5 2,-4.5" fill="#8fcbf8"/><polygon points="2,-4.5 5,-7.5 5,2.5 2,5.5" fill="#4a93cf"/><path d="M7 5V-5.500" stroke="#222" stroke-width="1"/><path d="M7 -7.500l1.600 2.800h-3.200z" fill="#222"/></g>
<g transform="translate(1859,1020)"><polygon points="-7,5.5 2,5.5 5,2.5 5,4.5 2,7.8 -7,7.8" fill="#c4c4c4"/><polygon points="-7,-4.5 2,-4.5 2,5.5 -7,5.5" fill="#6aaee4"/><polygon points="-7,-4.5 -4,-7.5 5,-7.5 2,-4.5" fill="#8fcbf8"/><polygon points="2,-4.5 5,-7.5 5,2.5 2,5.5" fill="#4a93cf"/><path d="M7 5V-5.500" stroke="#222" stroke-width="1"/><path d="M7 -7.500l1.600 2.800h-3.200z" fill="#222"/></g>
<path d="M155.5 1031V1037M179.5 1031V1037M203.5 1031V1037M227.5 1031V1037M251.5 1031V1037M275.5 1031V1037M299.5 1031V1037M323.5 1031V1037M347.5 1031V1037M371.5 1031V1037M395.5 1031V1037M419.5 1031V1037M443.5 1031V1037M467.5 1031V1037M491.5 1031V1037M515.5 1031V1037M539.5 1031V1037M563.5 1031V1037M587.5 1031V1037M611.5 1031V1037M635.5 1031V1037M659.5 1031V1037M683.5 1031V1037M707.5 1031V1037M731.5 1031V1037M755.5 1031V1037M779.5 1031V1037M803.5 1031V1037M827.5 1031V1037M851.5 1031V1037M875.5 1031V1037M899.5 1031V1037M923.5 1031V1037M947.5 1031V1037M971.5 1031V1037M995.5 1031V1037M1019.5 1031V1037M1043.5 1031V1037M1067.5 1031V1037M1091.5 1031V1037M1115.5 1031V1037M1139.5 1031V1037M1163.5 1031V1037M1187.5 1031V1037M1211.5 1031V1037M1235.5 1031V1037M1259.5 1031V1037M1283.5 1031V1037M1307.5 1031V1037M1331.5 1031V1037M1355.5 1031V1037M1379.5 1031V1037M1403.5 1031V1037M1427.5 1031V1037M1451.5 1031V1037M1475.5 1031V1037M1499.5 1031V1037M1523.5 1031V1037M1547.5 1031V1037M1571.5 1031V1037M1595.5 1031V1037M1619.5 1031V1037M1643.5 1031V1037M1667.5 1031V1037M1691.5 1031V1037M1715.5 1031V1037M1739.5 1031V1037M1763.5 1031V1037M1787.5 1031V1037M1811.5 1031V1037M1835.5 1031V1037M1859.5 1031V1037M155 1037H1869" stroke="#c6c6c6" stroke-width="1.500" fill="none"/>
<g transform="translate(1895.500,1025)" fill="#9a9a9a"><rect x="-1.700" y="-8.300" width="3.400" height="4" transform="rotate(0)"/><rect x="-1.700" y="-8.300" width="3.400" height="4" transform="rotate(45)"/><rect x="-1.700" y="-8.300" width="3.400" height="4" transform="rotate(90)"/><rect x="-1.700" y="-8.300" width="3.400" height="4" transform="rotate(135)"/><rect x="-1.700" y="-8.300" width="3.400" height="4" transform="rotate(180)"/><rect x="-1.700" y="-8.300" width="3.400" height="4" transform="rotate(225)"/><rect x="-1.700" y="-8.300" width="3.400" height="4" transform="rotate(270)"/><rect x="-1.700" y="-8.300" width="3.400" height="4" transform="rotate(315)"/><circle r="6"/><circle r="2.600" fill="#f1f1f1"/></g>
</svg>
<!--/TL-->
</div>
<!--TOP-->
<svg class="abs" style="left:0;top:0" width="1920" height="144" viewBox="0 0 1920 144">
<defs>
<linearGradient id="bl" x1="0" y1="0" x2="0" y2="1"><stop offset="0" stop-color="#7fc0f0"/><stop offset="1" stop-color="#4f9fdd"/></linearGradient>
<linearGradient id="gy" x1="0" y1="0" x2="1" y2="1"><stop offset="0" stop-color="#f4f4f4"/><stop offset="1" stop-color="#c9c9c9"/></linearGradient>
</defs>
<!-- app icon -->
<rect x="9" y="7" width="16" height="16" fill="#fbdcc0"/>
<path d="M14.5 9.5h6.5v2.6h-3.8v2.2h3.3v2.5h-3.3v3.7h-2.7z" fill="#d9741c"/>
<rect x="18" y="20" width="5" height="1.5" fill="#f0a460"/>
<!-- window controls -->
<path d="M1798 15.500h11" stroke="#111" stroke-width="1"/>
<rect x="1843.500" y="10.500" width="9" height="9" fill="none" stroke="#111" stroke-width="1"/>
<path d="M1889 10l10 10M1899 10l-10 10" stroke="#111" stroke-width="1.1"/>
<!-- QAT icons -->
<g fill="#666">
<rect x="10" y="40" width="4" height="4" rx=".6"/><rect x="15" y="40" width="4" height="4" rx=".6"/><rect x="20" y="40" width="4" height="4" rx=".6"/>
<rect x="10" y="45" width="4" height="4" rx=".6"/><rect x="15" y="45" width="4" height="4" rx=".6"/><rect x="20" y="45" width="4" height="4" rx=".6"/>
<rect x="10" y="50" width="4" height="4" rx=".6"/><rect x="15" y="50" width="4" height="4" rx=".6"/><rect x="20" y="50" width="4" height="4" rx=".6"/>
<path d="M44 39h7v5h5v10.500h-12a1 1 0 0 1-1-1v-13.500a1 1 0 0 1 1-1zM52.500 39.300l3.300 3.500h-3.300z"/>
<path d="M62 44h7l-3.500 4z"/>
<path d="M88.500 40h11.500l1.500 1.500v11a1 1 0 0 1-1 1h-12a1 1 0 0 1-1-1v-11.500a1 1 0 0 1 1-1zM90.500 41.500v4h8.500v-4zM96 42v3h1.500v-3zM90.500 48v5h8.500v-5z"/>
<path d="M142 44h7l-3.500 4z"/>
</g>
<path d="M128 42l-5 4.500 5 4.500M123.500 46.500h6.500a4 4 0 0 1 4 4v2" fill="none" stroke="#666" stroke-width="2"/>
<path d="M168 42l5 4.500-5 4.500M172.500 46.500h-6.500a4 4 0 0 0-4 4v2" fill="none" stroke="#9a9a9a" stroke-width="2"/>
<path d="M180 44h7l-3.500 4z" fill="#9a9a9a"/>
<!-- doc tab title icon -->
<path d="M901.250 42.500L908.750 41.250 916.700 42.500V51.700L908.750 56.250 901.250 51.700Z" fill="#686868"/><path d="M901.900 44L908.600 46.400V55.200L901.900 51.200Z" fill="#b4b4b4"/>
<!-- tab close x -->
<path d="M1689 44.500l8 8M1697 44.500l-8 8" stroke="#555" stroke-width="1.4"/>
<!-- plus button -->
<rect x="1708" y="35" width="28" height="28" rx="3" fill="#bababa"/>
<path d="M1722 43v13M1715.500 49.500h13" stroke="#666" stroke-width="2.6"/>
<!-- extension / refresh icon -->
<circle cx="1755.500" cy="47" r="7" fill="none" stroke="#666" stroke-width="2.2"/><path d="M1752 50l4-6 4 2-3 5z" fill="#666"/><path d="M1747 51l1 5 4-2z" fill="#666"/>
<!-- clock -->
<circle cx="1788.500" cy="47" r="7.200" fill="none" stroke="#666" stroke-width="1.2"/><circle cx="1788.500" cy="47" r="5.400" fill="#666"/><path d="M1788.500 43v4.500h3.500" stroke="#ddd" stroke-width="1.3" fill="none"/>
<!-- bell -->
<path d="M1822 40a5 5 0 0 1 5 5v4l2 3v1h-14v-1l2-3v-4a5 5 0 0 1 5-5z" fill="#666"/><circle cx="1822" cy="55" r="1.600" fill="#666"/><circle cx="1826.500" cy="42.500" r="2.800" fill="#1a9be8"/>
<!-- help -->
<circle cx="1855" cy="47" r="8" fill="#666"/><text x="1855" y="52" text-anchor="middle" font-family="Liberation Sans, sans-serif" font-weight="bold" font-size="13.500" fill="#eee">?</text>
<!-- avatar -->
<circle cx="1893.500" cy="47" r="12.300" fill="#efefef"/><text x="1893.500" y="51" text-anchor="middle" font-family="Liberation Sans, sans-serif" font-size="10.500" fill="#555">TF</text>
<!-- KONSTRUKTION button -->
<rect x="12.500" y="74" width="109.500" height="59.500" rx="4" fill="#f3f3f3" stroke="#dedede"/>
<path d="M107 102h7l-3.500 4z" fill="#333"/>
<!-- active tab underline -->
<rect x="139.500" y="84.700" width="120" height="2.800" fill="#1a8fd8"/>
<!-- separators -->
<g stroke="#dcdcdc" stroke-width="1.5"><path d="M524 90v50M836 90v50M964.500 90v50M1079 90v50M1153 90v50M1237 90v50"/></g>
<!-- dropdown arrows for groups -->
<g fill="#333"><path d="M349 132h6l-3 4zM696.500 132h6l-3 4zM943.500 132h6l-3 4zM1058.500 132h6l-3 4zM1133.500 132h6l-3 4zM1217.500 132h6l-3 4zM1317.500 132h6l-3 4z"/></g>
<!--ICONS-->
<g transform="translate(138,90)"><path d="M3.5 1.4H27M1.4 3.5V27M28.4 3.5V15M3.5 28.4H15" stroke="#555" stroke-width="1" stroke-dasharray="9 2" fill="none"/><rect x="0.09999999999999987" y="0.09999999999999987" width="2.6" height="2.6" fill="#555"/><rect x="27.099999999999998" y="0.09999999999999987" width="2.6" height="2.6" fill="#555"/><rect x="0.09999999999999987" y="27.099999999999998" width="2.6" height="2.6" fill="#555"/><rect x="7.000000000000001" y="7.000000000000001" width="2.6" height="2.6" fill="#555"/><rect x="20.3" y="7.000000000000001" width="2.6" height="2.6" fill="#555"/><rect x="7.000000000000001" y="20.2" width="2.6" height="2.6" fill="#555"/><path d="M10.5 8.3H19.5M8.3 10.5V19.5" stroke="#555" stroke-width="1" stroke-dasharray="4 1.5" fill="none"/><path d="M21.6 10.5C21.6 16 17 21 10.5 21.5" stroke="#555" stroke-width="1" fill="none"/><path d="M25 18.2V32M18.2 25H32" stroke="#2ea84a" stroke-width="4" fill="none"/></g>
<g transform="translate(181,90)"><polygon points="1,27 19,27 24.6,21.5 24.6,26 19,31.8 1,31.8" fill="#c4c4c4"/><polygon points="1,6 19,6 19,27.2 1,27.2" fill="#6aaee4"/><polygon points="1,6 7,0.3 24.6,0.3 19,6" fill="#8fcbf8"/><polygon points="19,6 24.6,0.3 24.6,21.5 19,27.2" fill="#4a93cf"/><path d="M28.4 25.5V3" stroke="#222" stroke-width="1.2"/><path d="M28.4 0.8l2.2 4.2h-4.4z" fill="#222"/></g>
<g transform="translate(224,90)"><polygon points="0,0.3 31.8,0.3 31.8,21.5 25,26.5 7,26.5 0,21.5" fill="#4a93cf"/><polygon points="0,0.3 31.8,0.3 23,14 9,14" fill="#8fcbf8"/><circle cx="16" cy="22.6" r="8.8" fill="#fff" stroke="#555" stroke-width="1"/></g>
<g transform="translate(267,90)"><path d="M.5 14Q15.4 -.5 31.4 13.500L25.700 18.600Q15.400 9.500 5.700 19Z" fill="#8fcbf8"/><path d="M.5 14L5.700 19V28.400L.5 22.600Z" fill="#4a93cf"/><path d="M5.700 19Q15.400 9.500 25.700 18.600V28.400Q15.400 19.500 5.700 28.400Z" fill="#6aaee4"/><path d="M31.400 13.500V22.600L25.700 28.400V18.600Z" fill="#fff" stroke="#555" stroke-width="1"/><path d="M29.700 7.200Q15.400 -3 3 6" stroke="#222" stroke-width="1.1" fill="none"/><path d="M.8 7.600l4.600-3.200.6 4z" fill="#222"/></g>
<g transform="translate(310,90)"><polygon points="0.5,7.7 25.1,7.7 25.1,31.8 0.5,31.8" fill="#dcdcdc" stroke="#555" stroke-width="1" stroke-linejoin="round"/><polygon points="0.5,7.7 7.9,0.3 31.4,0.3 25.1,7.7" fill="#f2f2f2" stroke="#555" stroke-width="1" stroke-linejoin="round"/><polygon points="25.1,7.7 31.4,0.3 31.4,24.4 25.1,31.8" fill="#b8b8b8" stroke="#555" stroke-width="1" stroke-linejoin="round"/><circle cx="11.9" cy="19.8" r="8.6" fill="#efefef" stroke="#555" stroke-width="1"/><circle cx="11.9" cy="19.8" r="6.8" fill="#6aaee4"/><path d="M12 13a8 8 0 0 0 6.700 8.500a6.800 6.800 0 0 0-6.700-8.500z" fill="#fff"/></g>
<g transform="translate(351,90)"><circle cx="6" cy="10" r="3.500" fill="#fff" stroke="#555" stroke-width="1"/><circle cx="15.8" cy="4.1" r="4" fill="#6aaee4"/><circle cx="26" cy="10" r="4" fill="#6aaee4"/><circle cx="26" cy="21" r="4" fill="#6aaee4"/><circle cx="15.8" cy="27.2" r="4" fill="#6aaee4"/><circle cx="6" cy="21" r="4" fill="#6aaee4"/></g>
<g transform="translate(394,90)"><path d="M9 5.500H23M5.400 9V23M9 26.400H23" stroke="#555" stroke-width="1.100" fill="none"/><rect x="2.400" y="2.500" width="6" height="6" fill="#fff" stroke="#555" stroke-width="1"/><rect x="22.9" y="2.0" width="7" height="7" fill="#6aaee4"/><rect x="1.9000000000000004" y="22.9" width="7" height="7" fill="#6aaee4"/><rect x="22.9" y="22.9" width="7" height="7" fill="#6aaee4"/></g>
<g transform="translate(437,90)"><path d="M9 2.500H21Q31.500 3 31.500 12V22Q30 28 24 31.500H10Q2.500 31 2.500 24V9Q3 3 9 2.500Z" fill="#b07fe6" stroke="#9560cf" stroke-width="1"/><path d="M5 12Q5 5 12 5H18V18H5ZM5 19.500H18V29.500H11Q5 29 5 24Z" fill="#c9a2f2"/><path d="M18.500 5V30M4 18.800H25" stroke="#8e5cc8" stroke-width=".8"/><path d="M25.500 16L31 13V22L25.500 29Z" fill="#8f5fcb"/><circle cx="25.500" cy="8.900" r="5" fill="#f0f0f0"/><polygon points="25.5,0.6 26.9,5.4 31.4,3.0 29.0,7.5 33.8,8.9 29.0,10.3 31.4,14.8 26.9,12.4 25.5,17.2 24.1,12.4 19.6,14.8 22.0,10.3 17.2,8.9 22.0,7.5 19.6,3.0 24.1,5.4" fill="#f7a21b"/></g>
<g transform="translate(481,90)"><polygon points="2,30.4 15.8,2 15.8,30.4" fill="#fff" stroke="#555" stroke-width="1.1" stroke-linejoin="round"/><polygon points="17.3,1.5 17.3,30.9 31.8,30.9" fill="#6aaee4"/></g>
<g transform="translate(535,90)"><polygon points="2.4,5.5 7.6,0.3 13.3,0.3 8.2,5.5 8.2,31.6 2.4,31.6" fill="#dcdcdc" stroke="#555" stroke-width="1" stroke-linejoin="round"/><polygon points="9.3,5.5 18.5,5.5 18.5,31.6 9.3,31.6" fill="#6aaee4"/><polygon points="9.3,5.5 14.5,0.3 23.6,0.3 18.5,5.5" fill="#8fcbf8"/><polygon points="18.5,5.5 23.6,0.3 23.6,26.7 18.5,31.6" fill="#4a93cf"/><path d="M21.500 15.400H29" stroke="#fff" stroke-width="3"/><path d="M22 15.400H28" stroke="#222" stroke-width="1.200"/><path d="M31 15.400l-4.200-2.300v4.600z" fill="#222"/></g>
<g transform="translate(578,90)"><path d="M1.300 31.600V7.700L8.800 .3H20.200L13.900 6.500Q25.300 8.900 25.300 21.500V31.600Z" fill="#dcdcdc" stroke="#555" stroke-width="1" stroke-linejoin="round"/><path d="M1.300 7.700L8.800 .3H20.200L13.900 7Z" fill="#f2f2f2"/><path d="M25.300 21.500L32.800 14V24.400L25.300 31.600Z" fill="#b8b8b8" stroke="#555" stroke-width="1" stroke-linejoin="round"/><path d="M13.900 6.500L20.200 .3Q32 3 32.800 14L26.500 20.500Q25 9 13.900 6.500Z" fill="#6aaee4"/></g>
<g transform="translate(621,90)"><polygon points="1.2,7.7 25.6,7.7 25.6,31.6 1.2,31.6" fill="#dcdcdc" stroke="#555" stroke-width="1" stroke-linejoin="round"/><polygon points="1.2,7.7 8.7,0.3 32.8,0.3 25.6,7.7" fill="#f2f2f2" stroke="#555" stroke-width="1" stroke-linejoin="round"/><polygon points="25.6,7.7 32.8,0.3 32.8,24.4 25.6,31.6" fill="#b8b8b8" stroke="#555" stroke-width="1" stroke-linejoin="round"/><polygon points="5.3,11.8 20.7,11.8 20.7,27.8 5.3,27.8" fill="#f4f4f4"/><polygon points="5.3,11.8 12.7,11.8 12.7,20.4 5.3,27.8" fill="#4a93cf"/><polygon points="12.7,20.4 20.7,20.4 20.7,27.8 5.3,27.8" fill="#8fcbf8"/></g>
<g transform="translate(665,90)"><polygon points="10.5,5.5 27.7,5.5 27.7,21.5 10.5,21.5" fill="#6aaee4"/><polygon points="10.5,5.5 14,0.3 31.7,0.3 27.7,5.5" fill="#8fcbf8"/><polygon points="27.7,5.5 31.7,0.3 31.7,17.5 27.7,21.5" fill="#4a93cf"/><polygon points="0.2,14.6 18,14.6 18,31.6 0.2,31.6" fill="#6aaee4"/><polygon points="0.2,14.6 3.5,10.3 10.5,10.3 10.5,14.6" fill="#8fcbf8"/><polygon points="18,21.5 22,21.5 22,27.5 18,31.6" fill="#4a93cf"/></g>
<g transform="translate(708,90)"><polygon points="2.1,21 24.2,21 24.2,30.7 2.1,30.7" fill="#dcdcdc" stroke="#555" stroke-width="1" stroke-linejoin="round"/><polygon points="24.2,21 30,15.2 30,25 24.2,30.7" fill="#b8b8b8" stroke="#555" stroke-width="1" stroke-linejoin="round"/><path d="M.2 18.300H24.200L31.700 11" stroke="#fff" stroke-width="3.500" fill="none"/><polygon points="2.1,6 24.2,6 24.2,15.8 2.1,15.8" fill="#6aaee4"/><polygon points="2.1,6 7.6,0.3 30,0.3 24.2,6" fill="#8fcbf8"/><polygon points="24.2,6 30,0.3 30,10 24.2,15.8" fill="#4a93cf"/><path d="M.2 18.300H24.200L31.700 11" stroke="#1a8fe0" stroke-width="1.200" fill="none"/></g>
<g transform="translate(751,90)"><path d="M15.900 5V27M5 15.900H27" stroke="#2c2c2c" stroke-width="2.400"/><path d="M15.900 .3l5 6.500h-10zM15.900 31.800l5-6.500h-10zM.4 15.900l6.500-5v10zM31.400 15.900l-6.500-5v10z" fill="#2c2c2c"/></g>
<g transform="translate(794,90)"><path d="M.4 8.300L7.800 .3H18.400L31.400 14.600V24.400L24.500 31.600H.4Z" fill="#dcdcdc" stroke="#555" stroke-width="1" stroke-linejoin="round"/><polygon points="0.4,8.3 7.8,0.3 18.4,0.6 11.3,8.3" fill="#f2f2f2"/><polygon points="24.5,21.5 31.4,14.6 31.4,24.4 24.5,31.6" fill="#b8b8b8" stroke="#555" stroke-width="1" stroke-linejoin="round"/><polygon points="11.3,7.7 18.4,0.6 31.4,14.6 24.5,21.5" fill="#6aaee4"/></g>
<g transform="translate(862,90)"><polygon points="2.3,19.8 14.4,19.8 14.4,31.6 2.3,31.6" fill="#dcdcdc" stroke="#999" stroke-width="1" stroke-linejoin="round"/><polygon points="14.9,19.8 26.4,19.8 26.4,31.6 14.9,31.6" fill="#dcdcdc" stroke="#999" stroke-width="1" stroke-linejoin="round"/><polygon points="14.9,19.8 18.3,16.3 29.8,16.3 26.4,19.8" fill="#f2f2f2" stroke="#999" stroke-width="1" stroke-linejoin="round"/><polygon points="26.4,19.8 29.8,16.3 29.8,27.8 26.4,31.6" fill="#b8b8b8" stroke="#999" stroke-width="1" stroke-linejoin="round"/><polygon points="2.3,7.7 14.9,7.7 14.9,19.8 2.3,19.8" fill="#6aaee4"/><polygon points="2.3,7.7 5.2,4.3 17.8,4.3 14.9,7.7" fill="#8fcbf8"/><polygon points="14.9,7.7 17.8,4.3 17.8,15.8 14.9,19.8" fill="#4a93cf"/><circle cx="25.200" cy="8.700" r="5" fill="#f0f0f0"/><polygon points="25.2,0.4 26.6,5.2 31.1,2.8 28.7,7.3 33.5,8.7 28.7,10.1 31.1,14.6 26.6,12.2 25.2,17.0 23.8,12.2 19.3,14.6 21.7,10.1 16.9,8.7 21.7,7.3 19.3,2.8 23.8,5.2" fill="#f7a21b"/></g>
<g transform="translate(906,90)"><path d="M3.400 10L9.900 3.700Q13 1.500 15.600 3.700V13.500H9.900V23.200L3.400 29Z" fill="#d8d8d8" stroke="#555" stroke-width="1" stroke-linejoin="round"/><path d="M9.900 4V13.500H15.600V3.700Z" fill="#ececec" stroke="#555" stroke-width=".8"/><path d="M24.200 4.900L30.800 11.200V29.500L24.200 23.800Z" fill="#d8d8d8" stroke="#555" stroke-width="1" stroke-linejoin="round"/><rect x="18.500" y="12.300" width="5.700" height="11" rx="2" fill="#c8c8c8" stroke="#555" stroke-width="1"/><path d="M12.400 14.500V20M21.400 8V13.500" stroke="#1a8fe0" stroke-width="1.200"/></g>
<g transform="translate(1006,90)"><polygon points="2,8.75 12,0 19.5,0 11,8.75 11,30 2,30" fill="#dcdcdc" stroke="#555" stroke-width="1" stroke-linejoin="round"/><polygon points="11,8.75 20.25,0 20.25,21.25 11,30" fill="#5dbb7c"/><polygon points="22.75,10 32,0 32,20 22.75,30" fill="#e29660"/></g>
<g transform="translate(1100,90)"><path d="M3.250 7.500V16M30.750 7.500V16M5 12H29" stroke="#555" stroke-width="1" fill="none"/><path d="M3.700 12l3.500-2v4zM30.300 12l-3.500-2v4z" fill="#555"/><rect x="3" y="18.250" width="28" height="5.500" fill="#f2a20f"/><path d="M6 18.250v2.500M9 18.250v1.500M12 18.250v2.500M15 18.250v1.500M18 18.250v2.500M21 18.250v1.500M24 18.250v2.500M27 18.250v1.500" stroke="#b97800" stroke-width=".8"/></g>
<g transform="translate(1179,90)"><rect x="2.250" y="1.250" width="28.750" height="28.750" fill="#86c6f6" stroke="#5a9fd6" stroke-width=".8"/><path d="M2.600 29.600V20Q6 12 10 12T18 20Q21 15 24 15T30.600 21V29.600Z" fill="#3d8fd0"/><circle cx="23" cy="9.250" r="3" fill="#fff6c4"/></g>
<g transform="translate(1271,90)"><rect x="-3" y="-3" width="38" height="38" fill="#0a93d9"/><rect x=".500" y=".500" width="27.250" height="20.750" fill="none" stroke="#8be070" stroke-width="1" stroke-dasharray="4 2"/><path d="M21 14.500V29L24.500 26 27 32 29.500 31 27 25H31.500Z" fill="#fff"/></g>
<!--/ICONS-->
</svg>
<div class="abs" style="left:30px;top:8.5px;color:#000;white-space:nowrap;font-size:12.0px;letter-spacing:-0.082px" id="ttl">Autodesk Fusion 360 (Lizenz für Bildungseinrichtungen)</div>
<div class="abs" style="left:922px;top:43px;font-size:12px;color:#444;white-space:nowrap" id="docname">Flügel v69*</div>
<div class="abs" style="left:21px;top:99px;font-weight:bold;color:#333;white-space:nowrap;font-size:10.0px;letter-spacing:0.121px" id="konstr">KONSTRUKTION</div>
<div class="tabname" style="left:152px;color:#1a8fd8;font-weight:bold;font-size:10.0px;letter-spacing:0.132px" id="t1">VOLUMENKÖRPER</div>
<div class="tabname" style="left:294px;font-size:10.0px;letter-spacing:0.008px" id="t2">FLÄCHE</div>
<div class="tabname" style="left:382px;font-size:10.0px;letter-spacing:-0.170px" id="t3">BLECH</div>
<div class="tabname" style="left:460px;font-size:10.0px;letter-spacing:-0.050px" id="t4">WERKZEUGE</div>
<div class="tlabel" style="left:290px;top:130px;font-size:10.0px;letter-spacing:-0.208px" id="g1">ERSTELLEN</div>
<div class="tlabel" style="left:652px;top:130px;font-size:10.0px;letter-spacing:-0.074px" id="g2">ÄNDERN</div>
<div class="tlabel" style="left:850px;top:130px;font-size:10.0px;letter-spacing:0.014px" id="g3">ZUSAMMENFüGEN</div>
<div class="tlabel" style="left:979px;top:130px;font-size:10.0px;letter-spacing:-0.268px" id="g4">KONSTRUIEREN</div>
<div class="tlabel" style="left:1093px;top:130px;font-size:10.0px;letter-spacing:-0.326px" id="g5">PRüFEN</div>
<div class="tlabel" style="left:1166px;top:130px;font-size:10.0px;letter-spacing:-0.314px" id="g6">EINFüGEN</div>
<div class="tlabel" style="left:1251px;top:130px;font-size:10.0px;letter-spacing:0.168px" id="g7">AUSWäHLEN</div>
<!--/TOP-->

  <div id="leftedge"></div>
</div>
<div id="rightstrip"></div>
<div id="taskbar">
<!--TB-->
<svg class="abs" style="left:0;top:-1040px" width="1920" height="1080" viewBox="0 0 1920 1080">
<rect x="48" y="1040.500" width="344" height="39.500" fill="#f2f2f2"/>
<path d="M16 1054.200l6.500-.9v6.300h-6.500zM23.300 1053.200l8.700-1.200v7.600h-8.700zM16 1060.400h6.500v6.300l-6.500-.9zM23.300 1060.400h8.700v7.600l-8.700-1.200z" fill="#fff"/>
<circle cx="71" cy="1057.500" r="5" fill="none" stroke="#222" stroke-width="1.400"/><path d="M67.500 1061.500l-7 6.500" stroke="#222" stroke-width="1.500"/>
<circle cx="415.800" cy="1060.300" r="6.800" fill="none" stroke="#fff" stroke-width="2"/>
<path d="M456 1054.500h10.500v10.500h-10.500zM456 1052.500h10.500M456 1067.500h10.500M470 1053v2M470 1058v9" stroke="#fff" stroke-width="1.300" fill="none"/>
<rect x="883.500" y="1040.500" width="47.500" height="39.500" fill="#4b4845"/>
<circle cx="515" cy="1059" r="12" fill="#1f8fd8"/><path d="M503.500 1061a11.500 11.500 0 0 1 23-3c0 4-3 5.500-7 5.500h-7c0 3 3 5 7 5q3 0 5-1.500a12 12 0 0 1-21-6z" fill="#35c6b0"/><path d="M509 1058a6 6 0 0 1 12 0z" fill="#1565b8"/>
<path d="M552 1050h8l2 2.500h14v4h-24z" fill="#e8a920"/><rect x="552" y="1054" width="24" height="15.500" rx="1" fill="#fbd15b"/><rect x="558" y="1063" width="12" height="6.500" fill="#3d8ee0"/><rect x="561" y="1066" width="6" height="3.500" fill="#fbd15b"/>
<rect x="606" y="1049" width="18" height="17" rx="1" fill="#2a8fe6"/><path d="M606 1061l9 5 9-5v9h-18z" fill="#1c6fc8"/><rect x="615" y="1049" width="9" height="8" fill="#5fc3f5"/><rect x="600.500" y="1053" width="13" height="13" rx="1.500" fill="#0f5fb5"/><circle cx="607" cy="1059.5" r="3.200" fill="none" stroke="#fff" stroke-width="1.800"/>
<rect x="655" y="1048" width="19" height="22" rx="1.500" fill="#2b7cd3"/><rect x="655" y="1059" width="19" height="5.500" fill="#185abd"/><rect x="655" y="1064.5" width="19" height="5.500" fill="#103f91"/><rect x="655" y="1048" width="19" height="5.500" fill="#41a5ee"/><rect x="650" y="1053" width="13" height="13" rx="1.500" fill="#185abd"/><text x="656.500" y="1063.5" text-anchor="middle" font-family="Liberation Sans, sans-serif" font-weight="bold" font-size="10" fill="#fff">W</text>
<rect x="704" y="1048" width="19" height="22" rx="1.500" fill="#21a366"/><rect x="713.500" y="1048" width="9.500" height="5.500" fill="#33c481"/><rect x="704" y="1059" width="19" height="11" fill="#107c41"/><rect x="713.500" y="1053.5" width="9.500" height="5.500" fill="#21a366"/><rect x="704" y="1053.5" width="9.500" height="5.500" fill="#107c41"/><rect x="699" y="1053" width="13" height="13" rx="1.500" fill="#107c41"/><text x="705.500" y="1063.5" text-anchor="middle" font-family="Liberation Sans, sans-serif" font-weight="bold" font-size="10" fill="#fff">X</text>
<rect x="751" y="1047.5" width="17.500" height="23" rx="1.500" fill="#8a8f98"/><rect x="753" y="1049.5" width="13.500" height="5" fill="#3ec0f0"/><rect x="753.0" y="1056.0" width="3.800" height="3.600" fill="#e6e6e6"/><rect x="753.0" y="1060.5" width="3.800" height="3.600" fill="#e6e6e6"/><rect x="753.0" y="1065.0" width="3.800" height="3.600" fill="#e6e6e6"/><rect x="757.7" y="1056.0" width="3.800" height="3.600" fill="#e6e6e6"/><rect x="757.7" y="1060.5" width="3.800" height="3.600" fill="#e6e6e6"/><rect x="757.7" y="1065.0" width="3.800" height="3.600" fill="#e6e6e6"/><rect x="762.4" y="1056.0" width="3.800" height="3.600" fill="#e6e6e6"/><rect x="762.4" y="1060.5" width="3.800" height="3.600" fill="#1f5fae"/><rect x="762.4" y="1065.0" width="3.800" height="3.600" fill="#1f5fae"/>
<path d="M798 1056q3-5 8-2l6-3 3 3q3 3 0 6l6 6-1 1-7-5q-6 3-12-1-4-2-3-5z" fill="#6e6960"/><circle cx="805" cy="1057" r="2" fill="#eee"/><circle cx="810" cy="1057" r="2" fill="#eee"/><circle cx="805.300" cy="1057.2" r=".9" fill="#111"/><circle cx="810.300" cy="1057.2" r=".9" fill="#111"/><circle cx="800" cy="1060" r="1.200" fill="#111"/><path d="M812 1062l8 5" stroke="#c8a060" stroke-width="1.500"/>
<circle cx="858" cy="1059" r="11.500" fill="#0e979d"/><path d="M851 1059a3.300 3.300 0 1 1 6.600 0q0 0 .4 0a3.300 3.300 0 1 1 6.600 0a3.300 3.300 0 1 1-6.600 0q0 0-.4 0a3.300 3.300 0 1 1-6.600 0z" fill="none" stroke="#fff" stroke-width="1.700"/>
<rect x="895" y="1047" width="24" height="24" fill="#fbd9bc"/><path d="M903 1051h10v4h-6v3.500h5v4h-5v6h-4z" fill="#e07a1e"/><rect x="909" y="1066" width="8" height="3" fill="#f0a050"/>
<circle cx="955.500" cy="1059" r="12" fill="#fff"/><path d="M947 1067.5a12 12 0 0 0 17-17z" fill="#ed6b21"/><path d="M946 1066l18-15" stroke="#2a2724" stroke-width="2.400"/>
<rect x="994" y="1047.5" width="21" height="19" rx="2.500" fill="#f7a41d"/><path d="M999 1066h11v3l-5.500 2.500-5.500-2.500z" fill="#f7a41d"/><path d="M1007.500 1052.5q-4.500-1.500-5 1.500t3.500 3 3.500 3-5.500 2" stroke="#fff" stroke-width="1.500" fill="none"/>
<path d="M1043 1058q1-8 9-6l4-5 3 5q5 1 5 6 0 5-6 6l4 7-2 1-6-7q-9 1-11-7z" fill="#8a857a"/><circle cx="1051" cy="1055" r="2.600" fill="#fff"/><circle cx="1058" cy="1055" r="2.600" fill="#fff"/><circle cx="1051.500" cy="1055.2" r="1.200" fill="#111"/><circle cx="1058.500" cy="1055.2" r="1.200" fill="#111"/><ellipse cx="1046" cy="1060" rx="2" ry="1.500" fill="#222"/>
<rect x="494.5" y="1078" width="40.5" height="2" fill="#f3efb2"/>
<rect x="593" y="1078" width="40.0" height="2" fill="#f3efb2"/>
<rect x="641.5" y="1078" width="40.5" height="2" fill="#f3efb2"/>
<rect x="883.5" y="1078" width="47.5" height="2" fill="#f3efb2"/>
<rect x="936" y="1078" width="40.3" height="2" fill="#f3efb2"/>
<rect x="1033.8" y="1078" width="40.2" height="2" fill="#f3efb2"/>
<path d="M1688 1062l4.500-4.500 4.500 4.500" stroke="#fff" stroke-width="1.300" fill="none"/>
<rect x="1711.500" y="1056.500" width="11" height="6.500" fill="none" stroke="#fff" stroke-width="1.200"/><rect x="1723" y="1058.500" width="1.500" height="2.500" fill="#fff"/><rect x="1713" y="1058" width="6" height="3.500" fill="#fff"/><path d="M1709 1054v5M1707.500 1055.500h3" stroke="#fff" stroke-width="1"/>
<path d="M1737.500 1053l3.500 2.300-3.500 2.300-3.500-2.300zM1744.500 1053l3.500 2.300-3.500 2.300-3.500-2.300zM1737.500 1058l3.500 2.300-3.500 2.300-3.500-2.300zM1744.500 1058l3.500 2.300-3.500 2.300-3.500-2.300zM1741 1061.500l3 2-3 2-3-2z" fill="#fff"/>
<path d="M1759 1066a8 8 0 0 1 11-11M1761.500 1066a5.500 5.500 0 0 1 7-7.500M1764 1066a3 3 0 0 1 3.500-4" stroke="#bbb" stroke-width="1.200" fill="none"/><circle cx="1768" cy="1066" r="1.200" fill="#fff"/>
<path d="M1782 1057.500h2.500l3.500-3v11l-3.500-3h-2.500z" fill="#fff"/><path d="M1790.500 1057q2 3 0 6M1793 1055q3.500 5 0 10" stroke="#bbb" stroke-width="1.100" fill="none"/>
<path d="M1879 1052h16v12h-10l-3.500 3.500v-3.500h-2.500z" fill="#fff"/><path d="M1881.500 1055.500h11M1881.500 1058.500h11M1881.500 1061.500h7" stroke="#2a2724" stroke-width="1.100"/><circle cx="1894" cy="1067" r="8.500" fill="#2a2724" fill-opacity=".85" stroke="#ddd" stroke-width="1"/>
<text x="1894" y="1071" text-anchor="middle" font-family="Liberation Sans, sans-serif" font-size="11" fill="#fff">16</text>
<path d="M1915.500 1040v40" stroke="#8a8a8a" stroke-width="1"/>
</svg>
<div class="abs" style="left:87.500px;top:12px;font-size:14.650px;color:#2d2d2d;white-space:nowrap" id="srch">Zur Suche Text hier eingeben</div>
<div class="abs" style="left:1807px;top:4.500px;width:53px;text-align:center;font-size:10.500px;color:#fff;white-space:nowrap;line-height:13px" id="clk">10:54</div>
<div class="abs" style="left:1800px;top:22px;width:67px;text-align:center;font-size:10.500px;color:#fff;white-space:nowrap;line-height:13px" id="dat">04.02.2021</div>
<!--/TB-->
</div>
</body>
</html>
